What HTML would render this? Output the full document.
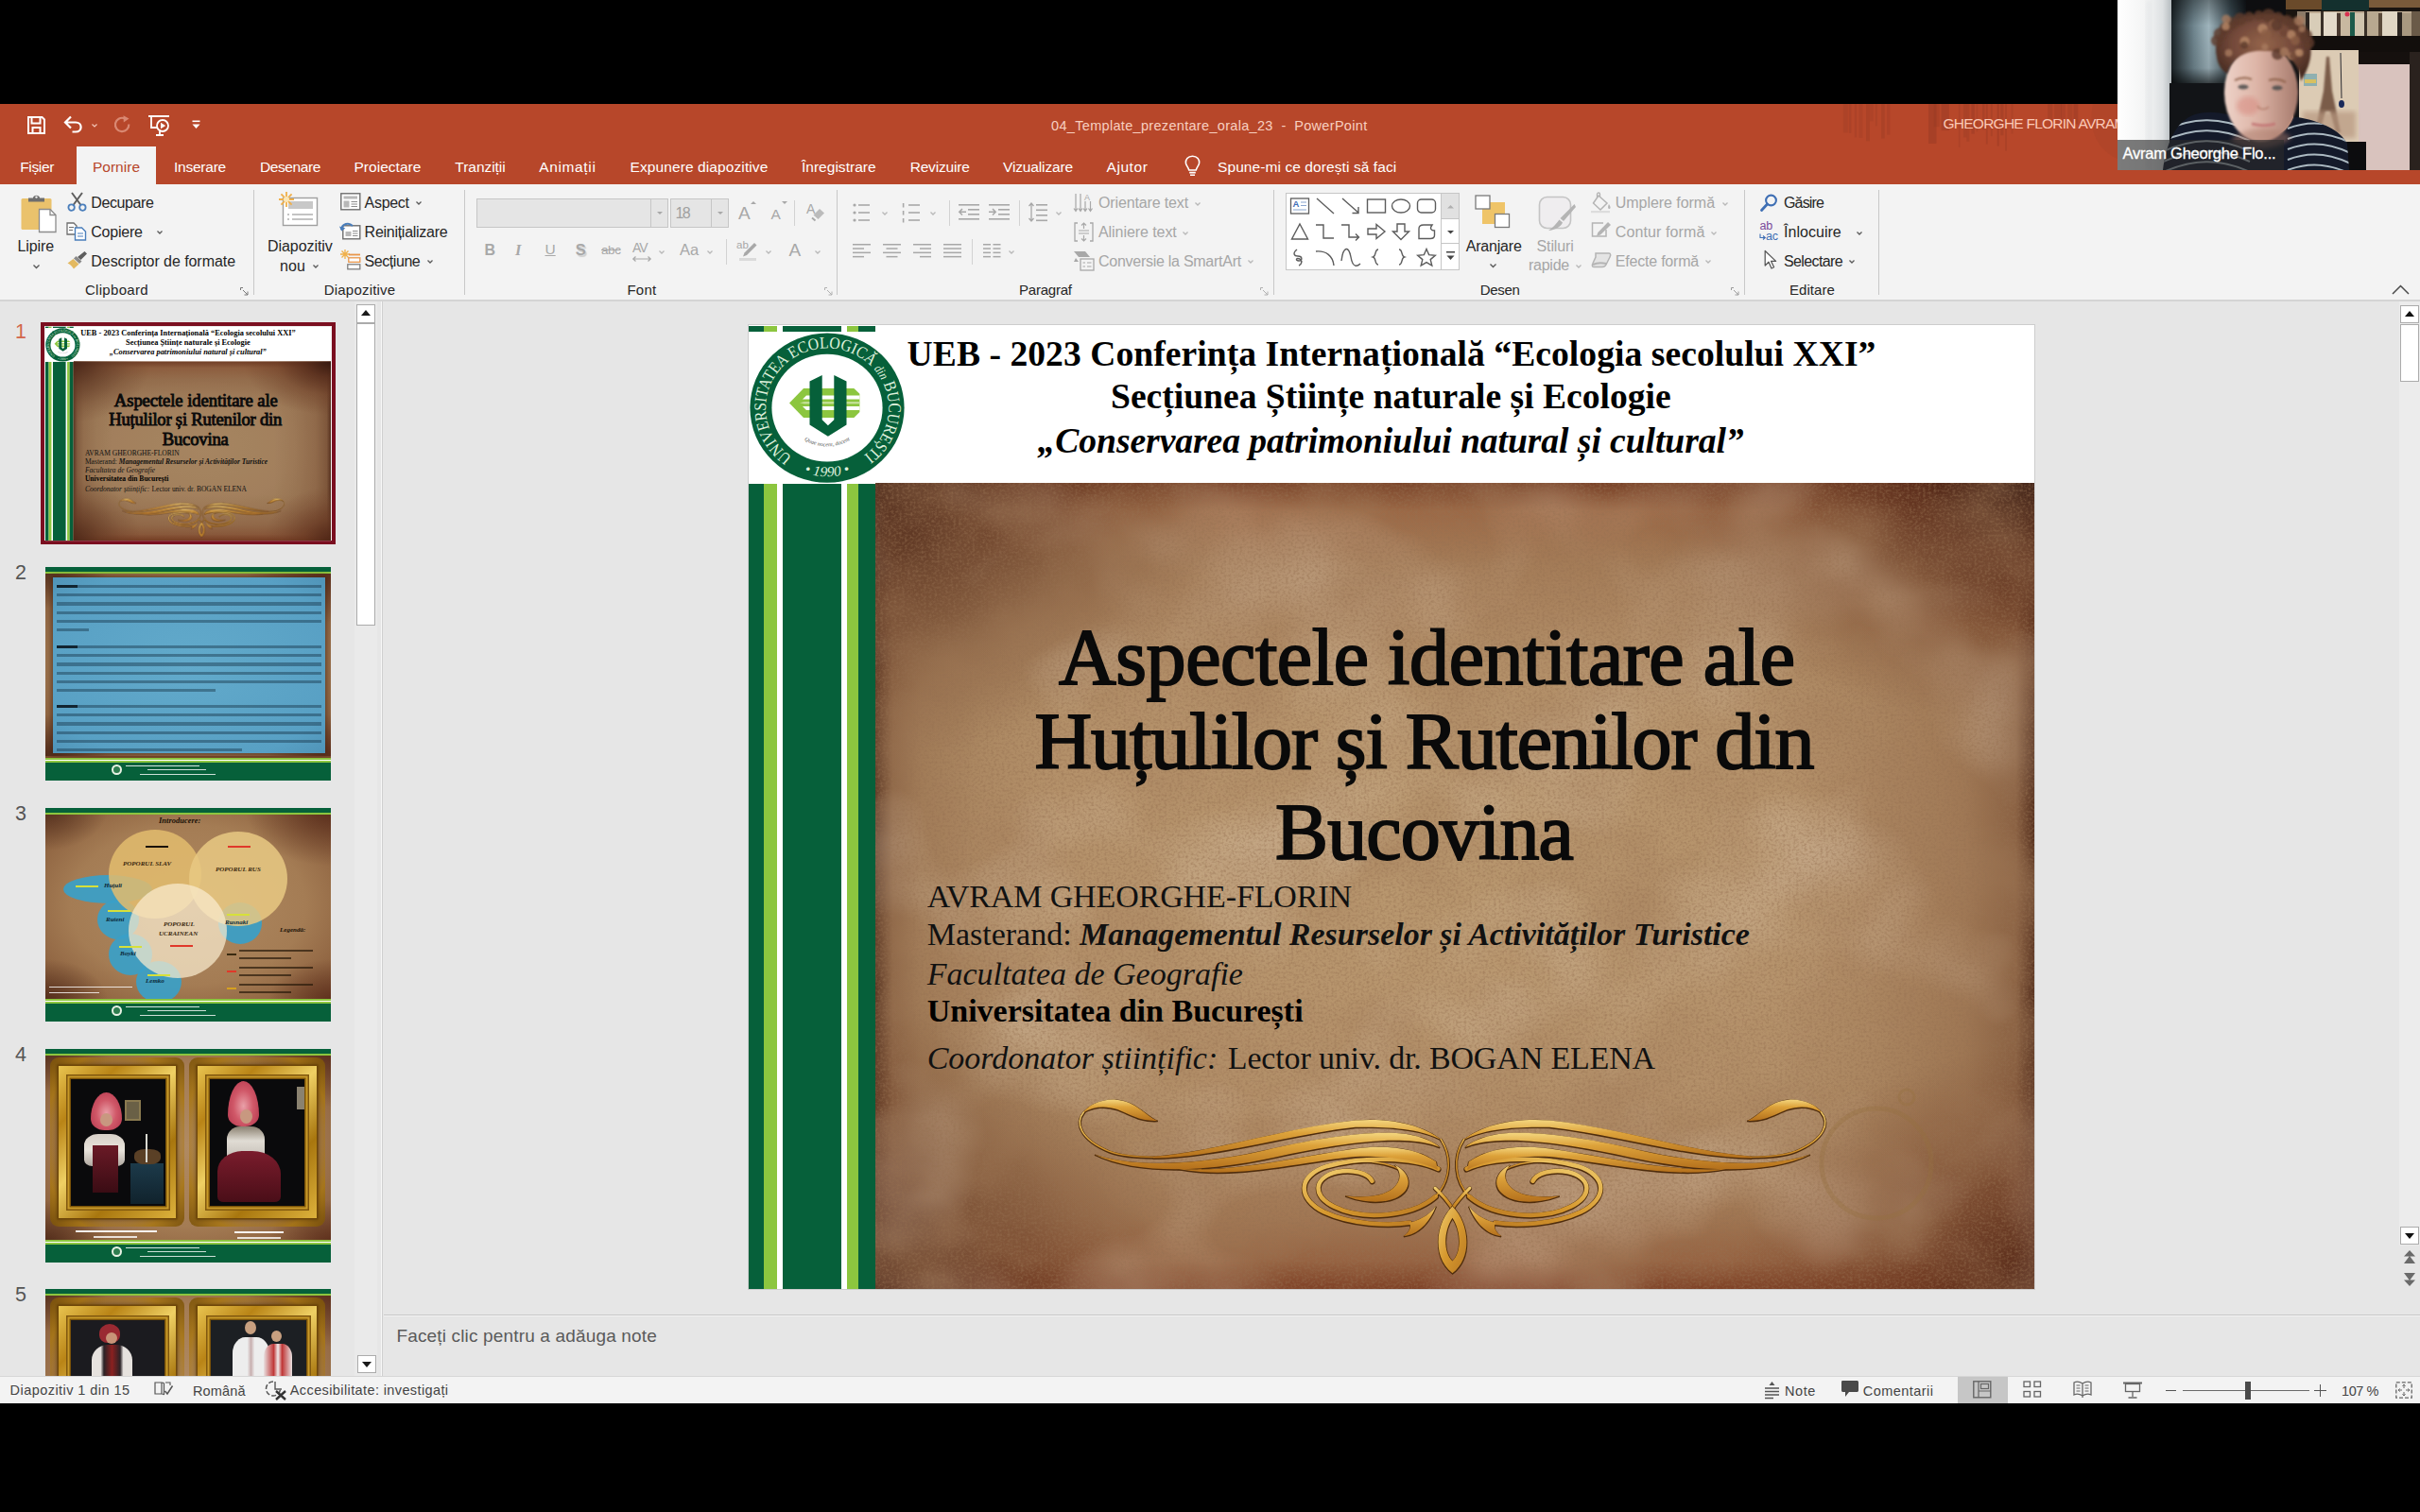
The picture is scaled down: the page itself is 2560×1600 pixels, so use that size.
<!DOCTYPE html>
<html><head><meta charset="utf-8"><title>PowerPoint</title><style>
html,body{margin:0;padding:0;background:#000;}
body{width:2560px;height:1600px;position:relative;overflow:hidden;font-family:"Liberation Sans",sans-serif;}
.t{position:absolute;white-space:pre;z-index:1;}
.b{position:absolute;box-sizing:border-box;}
svg{position:absolute;overflow:visible;}
</style></head><body>
<div class="b" style="left:0px;top:110px;width:2560px;height:85px;background:#B7472A;"></div>
<div class="b" style="left:0px;top:195px;width:2560px;height:123px;background:#F3F3F3;"></div>
<div class="b" style="left:0px;top:317px;width:2560px;height:2px;background:#D4D4D4;"></div>
<div class="b" style="left:0px;top:319px;width:2560px;height:1137px;background:#E6E6E6;"></div>
<div class="b" style="left:0px;top:1456px;width:2560px;height:29px;background:#F3F3F3;"></div>
<div class="b" style="left:0px;top:1456px;width:2560px;height:1px;background:#D6D6D6;"></div>
<span class="t" style="left:1112.1px;top:124.3px;font-size:14.5px;line-height:19px;color:#F8CFC0;letter-spacing:0.313px;">04_Template_prezentare_orala_23  -  PowerPoint</span>
<span class="t" style="left:2055.5px;top:121.1px;font-size:15.5px;line-height:20px;color:#FBC9B6;letter-spacing:-0.752px;">GHEORGHE FLORIN AVRAM</span>
<div class="b" style="left:81px;top:155px;width:84px;height:41px;background:#F3F3F3;"></div>
<span class="t" style="left:21.2px;top:166.7px;font-size:15.5px;line-height:20px;color:#FFFFFF;letter-spacing:-0.332px;">Fișier</span>
<span class="t" style="left:97.9px;top:166.7px;font-size:15.5px;line-height:20px;color:#B7472A;letter-spacing:0.033px;">Pornire</span>
<span class="t" style="left:184.0px;top:166.7px;font-size:15.5px;line-height:20px;color:#FFFFFF;letter-spacing:-0.233px;">Inserare</span>
<span class="t" style="left:275.0px;top:166.7px;font-size:15.5px;line-height:20px;color:#FFFFFF;letter-spacing:-0.401px;">Desenare</span>
<span class="t" style="left:374.5px;top:166.7px;font-size:15.5px;line-height:20px;color:#FFFFFF;letter-spacing:0.025px;">Proiectare</span>
<span class="t" style="left:481.3px;top:166.7px;font-size:15.5px;line-height:20px;color:#FFFFFF;letter-spacing:-0.032px;">Tranziții</span>
<span class="t" style="left:570.2px;top:166.7px;font-size:15.5px;line-height:20px;color:#FFFFFF;letter-spacing:0.646px;">Animații</span>
<span class="t" style="left:666.5px;top:166.7px;font-size:15.5px;line-height:20px;color:#FFFFFF;letter-spacing:0.100px;">Expunere diapozitive</span>
<span class="t" style="left:847.9px;top:166.7px;font-size:15.5px;line-height:20px;color:#FFFFFF;letter-spacing:0.034px;">Înregistrare</span>
<span class="t" style="left:962.7px;top:166.7px;font-size:15.5px;line-height:20px;color:#FFFFFF;letter-spacing:-0.190px;">Revizuire</span>
<span class="t" style="left:1061.0px;top:166.7px;font-size:15.5px;line-height:20px;color:#FFFFFF;letter-spacing:-0.140px;">Vizualizare</span>
<span class="t" style="left:1170.5px;top:166.7px;font-size:15.5px;line-height:20px;color:#FFFFFF;letter-spacing:0.568px;">Ajutor</span>
<span class="t" style="left:1288.0px;top:166.7px;font-size:15.5px;line-height:20px;color:#FFFFFF;letter-spacing:0.087px;">Spune-mi ce dorești să faci</span>
<div class="b" style="left:268px;top:201px;width:1px;height:111px;background:#C8C8C8;"></div>
<div class="b" style="left:491px;top:201px;width:1px;height:111px;background:#C8C8C8;"></div>
<div class="b" style="left:885px;top:201px;width:1px;height:111px;background:#C8C8C8;"></div>
<div class="b" style="left:1347px;top:201px;width:1px;height:111px;background:#C8C8C8;"></div>
<div class="b" style="left:1845px;top:201px;width:1px;height:111px;background:#C8C8C8;"></div>
<div class="b" style="left:1987px;top:201px;width:1px;height:111px;background:#C8C8C8;"></div>
<span class="t" style="left:18.5px;top:250.0px;font-size:16px;line-height:21px;color:#262626;letter-spacing:-0.106px;">Lipire</span>
<span class="t" style="left:96.3px;top:204.4px;font-size:16px;line-height:21px;color:#262626;letter-spacing:-0.410px;">Decupare</span>
<span class="t" style="left:96.3px;top:234.6px;font-size:16px;line-height:21px;color:#262626;letter-spacing:-0.233px;">Copiere</span>
<span class="t" style="left:96.3px;top:265.8px;font-size:16px;line-height:21px;color:#262626;letter-spacing:-0.054px;">Descriptor de formate</span>
<span class="t" style="left:89.9px;top:297.1px;font-size:15px;line-height:20px;color:#262626;letter-spacing:0.321px;">Clipboard</span>
<span class="t" style="left:283.0px;top:250.0px;font-size:16px;line-height:21px;color:#262626;letter-spacing:-0.066px;">Diapozitiv</span>
<span class="t" style="left:296.0px;top:270.8px;font-size:16px;line-height:21px;color:#262626;letter-spacing:0.101px;">nou</span>
<span class="t" style="left:385.6px;top:204.4px;font-size:16px;line-height:21px;color:#262626;letter-spacing:-0.302px;">Aspect</span>
<span class="t" style="left:385.6px;top:234.6px;font-size:16px;line-height:21px;color:#262626;letter-spacing:-0.271px;">Reinițializare</span>
<span class="t" style="left:385.6px;top:265.8px;font-size:16px;line-height:21px;color:#262626;letter-spacing:-0.446px;">Secțiune</span>
<span class="t" style="left:342.7px;top:297.1px;font-size:15px;line-height:20px;color:#262626;letter-spacing:0.212px;">Diapozitive</span>
<div class="b" style="left:504px;top:210px;width:203px;height:31px;background:#E5E5E5;border:1px solid #C6C6C6;"></div>
<div class="b" style="left:688px;top:211px;width:1px;height:29px;background:#C6C6C6;"></div>
<div class="b" style="left:709px;top:210px;width:62px;height:31px;background:#E5E5E5;border:1px solid #C6C6C6;"></div>
<div class="b" style="left:752px;top:211px;width:1px;height:29px;background:#C6C6C6;"></div>
<span class="t" style="left:714.5px;top:214.8px;font-size:16px;line-height:21px;color:#A0A0A0;letter-spacing:-1.649px;">18</span>
<span class="t" style="left:663.4px;top:297.1px;font-size:15px;line-height:20px;color:#262626;letter-spacing:0.246px;">Font</span>
<span class="t" style="left:1162.0px;top:204.4px;font-size:16px;line-height:21px;color:#A6A6A6;letter-spacing:-0.138px;">Orientare text</span>
<span class="t" style="left:1162.0px;top:234.6px;font-size:16px;line-height:21px;color:#A6A6A6;letter-spacing:-0.069px;">Aliniere text</span>
<span class="t" style="left:1162.0px;top:265.8px;font-size:16px;line-height:21px;color:#A6A6A6;letter-spacing:-0.267px;">Conversie la SmartArt</span>
<span class="t" style="left:1078.0px;top:297.1px;font-size:15px;line-height:20px;color:#262626;letter-spacing:-0.229px;">Paragraf</span>
<div class="b" style="left:1360px;top:204px;width:184px;height:82px;background:#FFFFFF;border:1px solid #C6C6C6;"></div>
<div class="b" style="left:1524px;top:205px;width:19px;height:27px;background:#E1E1E1;"></div>
<div class="b" style="left:1524px;top:204px;width:1px;height:82px;background:#C6C6C6;"></div>
<div class="b" style="left:1524px;top:231px;width:20px;height:1px;background:#C6C6C6;"></div>
<div class="b" style="left:1524px;top:257px;width:20px;height:1px;background:#C6C6C6;"></div>
<span class="t" style="left:1550.7px;top:249.8px;font-size:16px;line-height:21px;color:#262626;letter-spacing:-0.197px;">Aranjare</span>
<span class="t" style="left:1625.5px;top:249.8px;font-size:16px;line-height:21px;color:#A6A6A6;letter-spacing:-0.101px;">Stiluri</span>
<span class="t" style="left:1616.9px;top:270.4px;font-size:16px;line-height:21px;color:#A6A6A6;letter-spacing:-0.230px;">rapide</span>
<span class="t" style="left:1708.8px;top:204.4px;font-size:16px;line-height:21px;color:#A6A6A6;letter-spacing:-0.047px;">Umplere formă</span>
<span class="t" style="left:1708.8px;top:234.6px;font-size:16px;line-height:21px;color:#A6A6A6;letter-spacing:0.102px;">Contur formă</span>
<span class="t" style="left:1708.8px;top:265.8px;font-size:16px;line-height:21px;color:#A6A6A6;letter-spacing:-0.209px;">Efecte formă</span>
<span class="t" style="left:1565.8px;top:297.1px;font-size:15px;line-height:20px;color:#262626;letter-spacing:-0.312px;">Desen</span>
<span class="t" style="left:1887.0px;top:204.4px;font-size:16px;line-height:21px;color:#262626;letter-spacing:-0.854px;">Găsire</span>
<span class="t" style="left:1887.0px;top:234.6px;font-size:16px;line-height:21px;color:#262626;letter-spacing:0.036px;">Înlocuire</span>
<span class="t" style="left:1887.0px;top:265.8px;font-size:16px;line-height:21px;color:#262626;letter-spacing:-0.622px;">Selectare</span>
<span class="t" style="left:1893.0px;top:297.1px;font-size:15px;line-height:20px;color:#262626;letter-spacing:0.039px;">Editare</span>
<span class="t" style="left:10.6px;top:1462.2px;font-size:14.5px;line-height:19px;color:#444444;letter-spacing:0.443px;">Diapozitiv 1 din 15</span>
<span class="t" style="left:204.0px;top:1463.4px;font-size:14.5px;line-height:19px;color:#444444;letter-spacing:0.149px;">Română</span>
<span class="t" style="left:306.8px;top:1462.2px;font-size:14.5px;line-height:19px;color:#444444;letter-spacing:0.390px;">Accesibilitate: investigați</span>
<span class="t" style="left:1888.0px;top:1462.7px;font-size:14.5px;line-height:19px;color:#444444;letter-spacing:0.593px;">Note</span>
<span class="t" style="left:1970.8px;top:1462.7px;font-size:14.5px;line-height:19px;color:#444444;letter-spacing:0.449px;">Comentarii</span>
<div class="b" style="left:2071px;top:1457px;width:53px;height:28px;background:#C6C6C6;"></div>
<span class="t" style="left:2477.0px;top:1462.7px;font-size:14.5px;line-height:19px;color:#444444;letter-spacing:-0.423px;">107 %</span>
<div class="b" style="left:406px;top:1391px;width:2154px;height:1px;background:#C8C8C8;"></div>
<div class="b" style="left:406px;top:1392px;width:2154px;height:1px;background:#F2F2F2;"></div>
<span class="t" style="left:419.4px;top:1401.1px;font-size:19px;line-height:25px;color:#5A5A5A;letter-spacing:0.162px;">Faceți clic pentru a adăuga note</span>
<svg style="left:29px;top:123px;width:19px;height:19px" viewBox="0 0 19 19"><path d="M1 1 H15.5 L18 3.5 V18 H1 Z" fill="none" stroke="#fff" stroke-width="2"/><path d="M4.5 1 V7.5 H13.5 V1" fill="none" stroke="#fff" stroke-width="2"/><rect x="5.5" y="12" width="8" height="6" fill="none" stroke="#fff" stroke-width="2"/></svg>
<svg style="left:67px;top:122px;width:21px;height:19px" viewBox="0 0 21 19"><path d="M8 1.5 L2 7.5 L8 13.5 M2.5 7.5 H13 C20.5 7.5 20.5 17.5 13 17.5 H9.5" fill="none" stroke="#fff" stroke-width="2.2"/></svg>
<svg style="left:97.0px;top:131.0px;width:6px;height:4.0px" viewBox="0 0 6 4.0"><path d="M0.5 0.5 L3.0 3.0 L5.5 0.5" fill="none" stroke="#F3C6B8" stroke-width="1.2"/></svg>
<svg style="left:119px;top:122px;width:20px;height:20px" viewBox="0 0 20 20"><path d="M12.5 3.2 A7.2 7.2 0 1 0 17.3 9.5" fill="none" stroke="#D98872" stroke-width="2.2"/><path d="M11.5 0.2 L17.5 3.6 L11.8 7.4Z" fill="#D98872"/></svg>
<svg style="left:157px;top:121px;width:23px;height:23px" viewBox="0 0 23 23"><path d="M0 2 H22 M3 2 V14 H9 M8 22 H16 M12 18 V22" fill="none" stroke="#fff" stroke-width="1.8"/><circle cx="15" cy="12" r="6" fill="none" stroke="#fff" stroke-width="1.8"/><path d="M13 8.8 L18.2 12 L13 15.2Z" fill="#fff"/></svg>
<svg style="left:203px;top:127px;width:9px;height:10px" viewBox="0 0 9 10"><rect x="0.5" y="0.5" width="8" height="1.6" fill="#fff"/><path d="M0.5 4.5 H8.5 L4.5 9Z" fill="#fff"/></svg>
<svg style="left:1253px;top:164px;width:17px;height:23px" viewBox="0 0 17 23"><path d="M8.5 1.2 C3.5 1.2 1 5 1.4 8.6 C1.8 11.5 4.2 13 4.8 16 H12.2 C12.8 13 15.2 11.5 15.6 8.6 C16 5 13.5 1.2 8.5 1.2Z M5.2 18.6 H11.8 M6 21.2 H11" fill="none" stroke="#fff" stroke-width="1.6"/></svg>
<svg style="left:1946px;top:110px;width:300px;height:85px" viewBox="0 0 300 85"><rect x="3.9" y="0" width="4.8" height="30.3" fill="#8E3622" opacity="0.25"/><rect x="9.8" y="0" width="2.6" height="30.9" fill="#8E3622" opacity="0.26"/><rect x="15.8" y="0" width="2.3" height="35.4" fill="#8E3622" opacity="0.23"/><rect x="20.4" y="0" width="4.1" height="35.8" fill="#8E3622" opacity="0.20"/><rect x="28.0" y="0" width="4.0" height="39.2" fill="#8E3622" opacity="0.27"/><rect x="32.1" y="0" width="3.6" height="18.3" fill="#8E3622" opacity="0.20"/><rect x="37.9" y="0" width="2.1" height="23.3" fill="#8E3622" opacity="0.25"/><rect x="44.1" y="0" width="3.6" height="36.5" fill="#8E3622" opacity="0.27"/><rect x="50.0" y="0" width="3.4" height="32.6" fill="#8E3622" opacity="0.23"/><rect x="94.0" y="0" width="8.4" height="41.9" fill="#8E3622" opacity="0.40"/><rect x="99.6" y="0" width="6.2" height="24.2" fill="#8E3622" opacity="0.28"/><rect x="107.5" y="0" width="8.4" height="28.1" fill="#8E3622" opacity="0.34"/><rect x="125.9" y="0" width="1.5" height="45.8" fill="#8E3622" opacity="0.26"/><rect x="130.9" y="0" width="3.5" height="35.4" fill="#8E3622" opacity="0.29"/><rect x="134.3" y="0" width="3.1" height="39.8" fill="#8E3622" opacity="0.27"/><rect x="139.4" y="0" width="3.4" height="31.6" fill="#8E3622" opacity="0.34"/><rect x="144.6" y="0" width="1.7" height="29.3" fill="#8E3622" opacity="0.24"/><rect x="151.0" y="0" width="2.6" height="27.4" fill="#8E3622" opacity="0.30"/><rect x="154.9" y="0" width="1.8" height="42.6" fill="#8E3622" opacity="0.33"/><rect x="159.9" y="0" width="1.9" height="34.1" fill="#8E3622" opacity="0.27"/><rect x="166.7" y="0" width="2.1" height="44.6" fill="#8E3622" opacity="0.36"/><rect x="170.2" y="0" width="3.2" height="33.3" fill="#8E3622" opacity="0.33"/><rect x="175.1" y="0" width="1.9" height="49.7" fill="#8E3622" opacity="0.27"/><rect x="181.5" y="0" width="2.1" height="31.5" fill="#8E3622" opacity="0.24"/><rect x="220.2" y="0" width="5.0" height="17.0" fill="#8E3622" opacity="0.29"/><rect x="227.2" y="0" width="7.8" height="15.4" fill="#8E3622" opacity="0.28"/><rect x="234.1" y="0" width="4.7" height="20.4" fill="#8E3622" opacity="0.23"/><rect x="241.3" y="0" width="5.0" height="19.8" fill="#8E3622" opacity="0.24"/><rect x="247.5" y="0" width="4.8" height="21.3" fill="#8E3622" opacity="0.34"/><path d="M268 0 C262 30 275 50 294 58 L294 0Z" fill="#8E3622" opacity=".14"/></svg>
<svg style="left:21px;top:205px;width:40px;height:42px" viewBox="0 0 40 42"><rect x="1.5" y="5" width="32" height="33" rx="1.5" fill="#EAC26C"/><path d="M9 8.5 V4.5 H14 C14 0.8 21 0.8 21 4.5 H26 V8.5Z" fill="#6E6E6E"/><circle cx="17.5" cy="3.6" r="1.2" fill="#F3F3F3"/><path d="M20.5 16.5 H32 L38 22.5 V40.5 H20.5Z" fill="#fff" stroke="#8C8C8C" stroke-width="1.3"/><path d="M32 16.5 V22.5 H38" fill="none" stroke="#8C8C8C" stroke-width="1.3"/></svg>
<svg style="left:34.5px;top:279.75px;width:7px;height:4.5px" viewBox="0 0 7 4.5"><path d="M0.5 0.5 L3.5 3.5 L6.5 0.5" fill="none" stroke="#5a5a5a" stroke-width="1.4"/></svg>
<svg style="left:71px;top:203px;width:21px;height:21px" viewBox="0 0 21 21"><path d="M5 1 L14.5 14 M16 1 L6.5 14" stroke="#5E5E5E" stroke-width="2" fill="none"/><circle cx="4.6" cy="16.6" r="3.2" fill="none" stroke="#4A7EBB" stroke-width="1.8"/><circle cx="16.4" cy="16.6" r="3.2" fill="none" stroke="#4A7EBB" stroke-width="1.8"/></svg>
<svg style="left:70px;top:235px;width:22px;height:20px" viewBox="0 0 22 20"><path d="M1 1 H8 L11 4 V13 H1Z" fill="#fff" stroke="#6E6E6E" stroke-width="1.3"/><path d="M3 5.5 H8 M3 8.5 H7" stroke="#6E6E6E" stroke-width="1.2"/><path d="M9.5 6 H16.5 L20.5 10 V19 H9.5Z" fill="#fff" stroke="#4A7EBB" stroke-width="1.4"/><path d="M12 12 H18 M12 15 H18" stroke="#4A7EBB" stroke-width="1.2"/></svg>
<svg style="left:166.0px;top:244.0px;width:6px;height:4.0px" viewBox="0 0 6 4.0"><path d="M0.5 0.5 L3.0 3.0 L5.5 0.5" fill="none" stroke="#5a5a5a" stroke-width="1.3"/></svg>
<svg style="left:71px;top:265px;width:22px;height:20px" viewBox="0 0 22 20"><path d="M11 7 L18.5 1 L21 3.5 L14.5 10Z" fill="#5E5E5E"/><path d="M9.5 6 L15.5 11.5 L13 14 L7 8.5Z" fill="#8A8A8A"/><path d="M6.5 9 L12.5 14.5 L7 19.5 C5 16.5 3 14.5 0.5 13.5Z" fill="#E3B961"/></svg>
<svg style="left:254px;top:303.5px;width:9px;height:9px" viewBox="0 0 9 9"><path d="M0.5 3 V0.5 H3 M3 3 L8 8 M8 4.5 V8 H4.5" fill="none" stroke="#777" stroke-width="1"/></svg>
<svg style="left:295px;top:203px;width:42px;height:37px" viewBox="0 0 42 37"><rect x="4.5" y="6.5" width="36" height="29" fill="#fff" stroke="#A0A0A0" stroke-width="1.4"/><rect x="10" y="10" width="26" height="8" fill="#C8C8C8"/><path d="M9 24 H11 M14 24 H36 M9 29 H11 M14 29 H36" stroke="#B0B0B0" stroke-width="1.6"/><g stroke="#F0B04A" stroke-width="1.8"><path d="M8 0 V16 M0 8 H16 M2.4 2.4 L13.6 13.6 M13.6 2.4 L2.4 13.6"/></g><circle cx="8" cy="8" r="3" fill="#FBE7B8"/></svg>
<svg style="left:331.0px;top:280.0px;width:6px;height:4.0px" viewBox="0 0 6 4.0"><path d="M0.5 0.5 L3.0 3.0 L5.5 0.5" fill="none" stroke="#5a5a5a" stroke-width="1.3"/></svg>
<svg style="left:360px;top:204px;width:22px;height:19px" viewBox="0 0 22 19"><rect x="0.8" y="0.8" width="20" height="17" fill="#fff" stroke="#6E6E6E" stroke-width="1.4"/><rect x="3.5" y="3.5" width="14.5" height="3" fill="#B8B8B8"/><rect x="3.5" y="8.5" width="6" height="7" fill="#B8B8B8"/><path d="M11.5 9.5 H18 M11.5 12 H18 M11.5 14.5 H18" stroke="#8C8C8C" stroke-width="1.1"/></svg>
<svg style="left:439.7px;top:213.2px;width:6px;height:4.0px" viewBox="0 0 6 4.0"><path d="M0.5 0.5 L3.0 3.0 L5.5 0.5" fill="none" stroke="#5a5a5a" stroke-width="1.3"/></svg>
<svg style="left:359px;top:234px;width:23px;height:20px" viewBox="0 0 23 20"><rect x="3.8" y="4.8" width="18" height="14" fill="#fff" stroke="#6E6E6E" stroke-width="1.4"/><rect x="6.5" y="11" width="6" height="5" fill="#B8B8B8"/><path d="M14 10.5 H19.5 M14 13 H19.5 M14 15.5 H19.5" stroke="#8C8C8C" stroke-width="1.1"/><path d="M2 9 C3 2.5 10 1 14 5" fill="none" stroke="#4A7EBB" stroke-width="2"/><path d="M0 5.5 L2.2 10.6 L6.4 7.4Z" fill="#4A7EBB"/></svg>
<svg style="left:360px;top:264px;width:22px;height:22px" viewBox="0 0 22 22"><g stroke="#F0B04A" stroke-width="1.3"><path d="M5 0 V10 M0 5 H10 M1.5 1.5 L8.5 8.5 M8.5 1.5 L1.5 8.5"/></g><path d="M9 5.5 H21" stroke="#E8964A" stroke-width="1.8"/><rect x="8.8" y="8.8" width="12" height="4.5" fill="#fff" stroke="#E8964A" stroke-width="1.3"/><rect x="7.8" y="15.8" width="13" height="5" fill="#fff" stroke="#7E7E7E" stroke-width="1.3"/></svg>
<svg style="left:452.0px;top:274.8px;width:6px;height:4.0px" viewBox="0 0 6 4.0"><path d="M0.5 0.5 L3.0 3.0 L5.5 0.5" fill="none" stroke="#5a5a5a" stroke-width="1.3"/></svg>
<svg style="left:694.5px;top:224.0px;width:6px;height:3.0px" viewBox="0 0 6 3.0"><path d="M0 0 L3.0 3.0 L6 0Z" fill="#A8A8A8"/></svg>
<svg style="left:758.5px;top:224.0px;width:6px;height:3.0px" viewBox="0 0 6 3.0"><path d="M0 0 L3.0 3.0 L6 0Z" fill="#A8A8A8"/></svg>
<span class="t" style="left:781.0px;top:213.1px;font-size:19px;line-height:25px;color:#A8A8A8;">A</span>
<svg style="left:794.0px;top:213.0px;width:6px;height:3.0px" viewBox="0 0 6 3.0"><path d="M0 3.0 L3.0 0 L6 3.0Z" fill="#A8A8A8"/></svg>
<span class="t" style="left:815.5px;top:216.8px;font-size:15.5px;line-height:20px;color:#A8A8A8;">A</span>
<svg style="left:826.5px;top:213.0px;width:6px;height:3.0px" viewBox="0 0 6 3.0"><path d="M0 0 L3.0 3.0 L6 0Z" fill="#A8A8A8"/></svg>
<div class="b" style="left:840px;top:212px;width:1px;height:27px;background:#D2D2D2;"></div>
<span class="t" style="left:853.0px;top:212.4px;font-size:14px;line-height:18px;color:#A8A8A8;">A</span>
<svg style="left:858px;top:220px;width:15px;height:14px" viewBox="0 0 15 14"><path d="M9 1 L14 5.5 L7.5 12 L2.5 7.5Z" fill="#A8A8A8" opacity=".75"/><path d="M1 10.5 L4.5 13.5" stroke="#A8A8A8" stroke-width="2"/></svg>
<span class="t" style="left:512.6px;top:254.2px;font-size:16px;line-height:21px;color:#A8A8A8;font-weight:bold;">B</span>
<span class="t" style="left:545.0px;top:254.2px;font-size:16.5px;line-height:21px;color:#A8A8A8;font-family:'Liberation Serif',serif;font-weight:bold;font-style:italic;">I</span>
<span class="t" style="left:576.5px;top:254.2px;font-size:15.5px;line-height:20px;color:#A8A8A8;text-decoration:underline;">U</span>
<span class="t" style="left:608.7px;top:254.2px;font-size:16.5px;line-height:21px;color:#A8A8A8;font-weight:bold;text-shadow:1.5px 1.5px 1px #cfcfcf;">S</span>
<span class="t" style="left:636.0px;top:256.3px;font-size:13.5px;line-height:18px;color:#A8A8A8;text-decoration:line-through;letter-spacing:-0.4px;">abc</span>
<span class="t" style="left:669.0px;top:252.8px;font-size:14px;line-height:18px;color:#A8A8A8;letter-spacing:-1px;">AV</span>
<svg style="left:669px;top:271px;width:20px;height:6px" viewBox="0 0 20 6"><path d="M0.5 3 H19.5 M3.5 0.5 L0.8 3 L3.5 5.5 M16.5 0.5 L19.2 3 L16.5 5.5" fill="none" stroke="#A8A8A8" stroke-width="1.2"/></svg>
<svg style="left:696.6px;top:264.5px;width:6px;height:4.0px" viewBox="0 0 6 4.0"><path d="M0.5 0.5 L3.0 3.0 L5.5 0.5" fill="none" stroke="#B8B8B8" stroke-width="1.3"/></svg>
<span class="t" style="left:719.0px;top:254.2px;font-size:16.5px;line-height:21px;color:#A8A8A8;">Aa</span>
<svg style="left:747.6px;top:264.5px;width:6px;height:4.0px" viewBox="0 0 6 4.0"><path d="M0.5 0.5 L3.0 3.0 L5.5 0.5" fill="none" stroke="#B8B8B8" stroke-width="1.3"/></svg>
<div class="b" style="left:768px;top:253px;width:1px;height:27px;background:#D2D2D2;"></div>
<span class="t" style="left:779.0px;top:251.5px;font-size:11.5px;line-height:15px;color:#A8A8A8;">ab</span>
<svg style="left:781px;top:256px;width:20px;height:20px" viewBox="0 0 20 20"><path d="M17 1 L19.5 3.5 L9 14 L5 15.5 L6.5 11.5Z" fill="#A8A8A8"/><rect x="1" y="17" width="18" height="3" fill="#DADADA"/></svg>
<svg style="left:810.0px;top:264.5px;width:6px;height:4.0px" viewBox="0 0 6 4.0"><path d="M0.5 0.5 L3.0 3.0 L5.5 0.5" fill="none" stroke="#B8B8B8" stroke-width="1.3"/></svg>
<span class="t" style="left:834.5px;top:252.0px;font-size:19px;line-height:25px;color:#A8A8A8;">A</span>
<svg style="left:862.0px;top:264.5px;width:6px;height:4.0px" viewBox="0 0 6 4.0"><path d="M0.5 0.5 L3.0 3.0 L5.5 0.5" fill="none" stroke="#B8B8B8" stroke-width="1.3"/></svg>
<svg style="left:872px;top:303.5px;width:9px;height:9px" viewBox="0 0 9 9"><path d="M0.5 3 V0.5 H3 M3 3 L8 8 M8 4.5 V8 H4.5" fill="none" stroke="#B0B0B0" stroke-width="1"/></svg>
<svg style="left:902px;top:215px;width:19px;height:20px" viewBox="0 0 19 20"><circle cx="2" cy="2" r="1.6" fill="#A8A8A8"/><rect x="6" y="1.2" width="12" height="1.6" fill="#A8A8A8"/><circle cx="2" cy="10" r="1.6" fill="#A8A8A8"/><rect x="6" y="9.2" width="12" height="1.6" fill="#A8A8A8"/><circle cx="2" cy="18" r="1.6" fill="#A8A8A8"/><rect x="6" y="17.2" width="12" height="1.6" fill="#A8A8A8"/></svg>
<svg style="left:932.8px;top:223.5px;width:6px;height:4.0px" viewBox="0 0 6 4.0"><path d="M0.5 0.5 L3.0 3.0 L5.5 0.5" fill="none" stroke="#B8B8B8" stroke-width="1.3"/></svg>
<svg style="left:954px;top:215px;width:20px;height:20px" viewBox="0 0 20 20"><rect x="7" y="1.2" width="12" height="1.6" fill="#A8A8A8"/><rect x="7" y="9.2" width="12" height="1.6" fill="#A8A8A8"/><rect x="7" y="17.2" width="12" height="1.6" fill="#A8A8A8"/><rect x="0.8" y="0" width="1.6" height="4.5" fill="#A8A8A8"/><rect x="0.8" y="8" width="1.6" height="4.5" fill="#A8A8A8"/><rect x="0.8" y="16" width="1.6" height="4.5" fill="#A8A8A8"/></svg>
<svg style="left:984.4px;top:223.5px;width:6px;height:4.0px" viewBox="0 0 6 4.0"><path d="M0.5 0.5 L3.0 3.0 L5.5 0.5" fill="none" stroke="#B8B8B8" stroke-width="1.3"/></svg>
<div class="b" style="left:1004px;top:212px;width:1px;height:27px;background:#D2D2D2;"></div>
<svg style="left:1014px;top:216px;width:22px;height:18px" viewBox="0 0 22 18"><rect x="0" y="0" width="22" height="1.6" fill="#A8A8A8"/><rect x="10" y="5" width="12" height="1.6" fill="#A8A8A8"/><rect x="10" y="10" width="12" height="1.6" fill="#A8A8A8"/><rect x="0" y="15" width="22" height="1.6" fill="#A8A8A8"/><path d="M8 8.3 H1 M4 5 L0.8 8.3 L4 11.6" fill="none" stroke="#A8A8A8" stroke-width="1.5"/></svg>
<svg style="left:1046px;top:216px;width:22px;height:18px" viewBox="0 0 22 18"><rect x="0" y="0" width="22" height="1.6" fill="#A8A8A8"/><rect x="10" y="5" width="12" height="1.6" fill="#A8A8A8"/><rect x="10" y="10" width="12" height="1.6" fill="#A8A8A8"/><rect x="0" y="15" width="22" height="1.6" fill="#A8A8A8"/><path d="M0 8.3 H7 M4 5 L7.2 8.3 L4 11.6" fill="none" stroke="#A8A8A8" stroke-width="1.5"/></svg>
<div class="b" style="left:1078px;top:212px;width:1px;height:27px;background:#D2D2D2;"></div>
<svg style="left:1088px;top:214px;width:20px;height:21px" viewBox="0 0 20 21"><rect x="8" y="2" width="12" height="1.6" fill="#A8A8A8"/><rect x="8" y="7.5" width="12" height="1.6" fill="#A8A8A8"/><rect x="8" y="13" width="12" height="1.6" fill="#A8A8A8"/><rect x="8" y="18.5" width="12" height="1.6" fill="#A8A8A8"/><path d="M3 1 V20 M0.5 4 L3 1 L5.5 4 M0.5 17 L3 20 L5.5 17" fill="none" stroke="#A8A8A8" stroke-width="1.3"/></svg>
<svg style="left:1116.7px;top:223.5px;width:6px;height:4.0px" viewBox="0 0 6 4.0"><path d="M0.5 0.5 L3.0 3.0 L5.5 0.5" fill="none" stroke="#B8B8B8" stroke-width="1.3"/></svg>
<svg style="left:902px;top:258px;width:20px;height:15px" viewBox="0 0 20 15"><rect x="0" y="0.0" width="19" height="1.5" fill="#A8A8A8"/><rect x="0" y="4.3" width="12" height="1.5" fill="#A8A8A8"/><rect x="0" y="8.6" width="19" height="1.5" fill="#A8A8A8"/><rect x="0" y="12.899999999999999" width="12" height="1.5" fill="#A8A8A8"/></svg>
<svg style="left:934px;top:258px;width:20px;height:15px" viewBox="0 0 20 15"><rect x="0" y="0.0" width="19" height="1.5" fill="#A8A8A8"/><rect x="3.5" y="4.3" width="12" height="1.5" fill="#A8A8A8"/><rect x="0" y="8.6" width="19" height="1.5" fill="#A8A8A8"/><rect x="3.5" y="12.899999999999999" width="12" height="1.5" fill="#A8A8A8"/></svg>
<svg style="left:966px;top:258px;width:20px;height:15px" viewBox="0 0 20 15"><rect x="0" y="0.0" width="19" height="1.5" fill="#A8A8A8"/><rect x="7" y="4.3" width="12" height="1.5" fill="#A8A8A8"/><rect x="0" y="8.6" width="19" height="1.5" fill="#A8A8A8"/><rect x="7" y="12.899999999999999" width="12" height="1.5" fill="#A8A8A8"/></svg>
<svg style="left:998px;top:258px;width:20px;height:15px" viewBox="0 0 20 15"><rect x="0" y="0.0" width="19" height="1.5" fill="#A8A8A8"/><rect x="0" y="4.3" width="19" height="1.5" fill="#A8A8A8"/><rect x="0" y="8.6" width="19" height="1.5" fill="#A8A8A8"/><rect x="0" y="12.899999999999999" width="19" height="1.5" fill="#A8A8A8"/></svg>
<div class="b" style="left:1028px;top:253px;width:1px;height:27px;background:#D2D2D2;"></div>
<svg style="left:1039.5px;top:258px;width:19px;height:15px" viewBox="0 0 19 15"><rect x="0" y="0.0" width="8" height="1.5" fill="#A8A8A8"/><rect x="10.5" y="0.0" width="8" height="1.5" fill="#A8A8A8"/><rect x="0" y="4.3" width="8" height="1.5" fill="#A8A8A8"/><rect x="10.5" y="4.3" width="8" height="1.5" fill="#A8A8A8"/><rect x="0" y="8.6" width="8" height="1.5" fill="#A8A8A8"/><rect x="10.5" y="8.6" width="8" height="1.5" fill="#A8A8A8"/><rect x="0" y="12.899999999999999" width="8" height="1.5" fill="#A8A8A8"/><rect x="10.5" y="12.899999999999999" width="8" height="1.5" fill="#A8A8A8"/></svg>
<svg style="left:1067.0px;top:264.5px;width:6px;height:4.0px" viewBox="0 0 6 4.0"><path d="M0.5 0.5 L3.0 3.0 L5.5 0.5" fill="none" stroke="#B8B8B8" stroke-width="1.3"/></svg>
<svg style="left:1136px;top:204px;width:21px;height:22px" viewBox="0 0 21 22"><path d="M2 1 V19 M7 1 V19 M12 9 V19 M17.5 9 V19 M0 16.5 L2 19.5 L4 16.5 M5 16.5 L7 19.5 L9 16.5 M10 16.5 L12 19.5 L14 16.5 M15.5 16.5 L17.5 19.5 L19.5 16.5" fill="none" stroke="#A8A8A8" stroke-width="1.2"/><text x="11" y="7.5" font-size="9" font-family="Liberation Sans,sans-serif" fill="#A8A8A8">A</text></svg>
<svg style="left:1263.8px;top:213.5px;width:6px;height:4.0px" viewBox="0 0 6 4.0"><path d="M0.5 0.5 L3.0 3.0 L5.5 0.5" fill="none" stroke="#B8B8B8" stroke-width="1.3"/></svg>
<svg style="left:1136px;top:235px;width:21px;height:21px" viewBox="0 0 21 21"><path d="M4 1 H1 V20 H4 M17 1 H20 V20 H17" fill="none" stroke="#A8A8A8" stroke-width="1.3"/><path d="M10.5 1 V7 M8 3.5 L10.5 1 L13 3.5 M10.5 20 V14 M8 17.5 L10.5 20 L13 17.5 M5 9 H16 M5 12 H16" fill="none" stroke="#A8A8A8" stroke-width="1.2"/></svg>
<svg style="left:1251.0px;top:244.5px;width:6px;height:4.0px" viewBox="0 0 6 4.0"><path d="M0.5 0.5 L3.0 3.0 L5.5 0.5" fill="none" stroke="#B8B8B8" stroke-width="1.3"/></svg>
<svg style="left:1136px;top:265px;width:22px;height:22px" viewBox="0 0 22 22"><path d="M0 1 H12 L17 7 H5Z" fill="#A8A8A8"/><path d="M2 8 L0 12 H5" fill="#A8A8A8"/><rect x="7" y="9" width="14" height="12" fill="#F3F3F3" stroke="#A8A8A8" stroke-width="1.3"/><path d="M9.5 13 H12 M14 13 H18.5 M9.5 17 H12 M14 17 H18.5" stroke="#A8A8A8" stroke-width="1.2"/></svg>
<svg style="left:1319.8px;top:275.0px;width:6px;height:4.0px" viewBox="0 0 6 4.0"><path d="M0.5 0.5 L3.0 3.0 L5.5 0.5" fill="none" stroke="#B8B8B8" stroke-width="1.3"/></svg>
<svg style="left:1333px;top:303.5px;width:9px;height:9px" viewBox="0 0 9 9"><path d="M0.5 3 V0.5 H3 M3 3 L8 8 M8 4.5 V8 H4.5" fill="none" stroke="#B0B0B0" stroke-width="1"/></svg>
<svg style="left:1364.0px;top:207.5px;width:22px;height:20px" viewBox="0 0 22 20"><rect x="1.5" y="2" width="19" height="16" fill="#fff" stroke="#5C5C5C" stroke-width="1.3"/><text x="3.5" y="11" font-size="9.5" font-weight="bold" font-family="Liberation Sans,sans-serif" fill="#3E6DB5">A</text><path d="M12 6 H18 M12 9.5 H18 M4 14 H18" stroke="#8AA6D0" stroke-width="1.1"/></svg>
<svg style="left:1391.0px;top:207.5px;width:22px;height:20px" viewBox="0 0 22 20"><path d="M2 2 L20 18" fill="none" stroke="#5C5C5C" stroke-width="1.4"/></svg>
<svg style="left:1418.0px;top:207.5px;width:22px;height:20px" viewBox="0 0 22 20"><path d="M2 2 L19 17 M19 11 V17.5 H12.5" fill="none" stroke="#5C5C5C" stroke-width="1.4"/></svg>
<svg style="left:1444.7px;top:207.5px;width:22px;height:20px" viewBox="0 0 22 20"><rect x="1.5" y="3" width="19" height="14" fill="none" stroke="#5C5C5C" stroke-width="1.4"/></svg>
<svg style="left:1471.0px;top:207.5px;width:22px;height:20px" viewBox="0 0 22 20"><ellipse cx="11" cy="10" rx="9.5" ry="7" fill="none" stroke="#5C5C5C" stroke-width="1.4"/></svg>
<svg style="left:1498.0px;top:207.5px;width:22px;height:20px" viewBox="0 0 22 20"><rect x="1.5" y="3" width="19" height="14" rx="4" fill="none" stroke="#5C5C5C" stroke-width="1.4"/></svg>
<svg style="left:1364.0px;top:234.8px;width:22px;height:20px" viewBox="0 0 22 20"><path d="M11 2 L19.5 18 H2.5Z" fill="none" stroke="#5C5C5C" stroke-width="1.4"/></svg>
<svg style="left:1391.0px;top:234.8px;width:22px;height:20px" viewBox="0 0 22 20"><path d="M1 3 H9 V17 H20" fill="none" stroke="#5C5C5C" stroke-width="1.4"/></svg>
<svg style="left:1418.0px;top:234.8px;width:22px;height:20px" viewBox="0 0 22 20"><path d="M1 3 H9 V16 H19 M16 12.5 L19.5 16 L16 19.5" fill="none" stroke="#5C5C5C" stroke-width="1.4"/></svg>
<svg style="left:1444.7px;top:234.8px;width:22px;height:20px" viewBox="0 0 22 20"><path d="M2 7 H11 V2.5 L20 10 L11 17.5 V13 H2Z" fill="none" stroke="#5C5C5C" stroke-width="1.4"/></svg>
<svg style="left:1471.0px;top:234.8px;width:22px;height:20px" viewBox="0 0 22 20"><path d="M7 2 H15 V10 H19.5 L11 18.5 L2.5 10 H7Z" fill="none" stroke="#5C5C5C" stroke-width="1.4"/></svg>
<svg style="left:1498.0px;top:234.8px;width:22px;height:20px" viewBox="0 0 22 20"><path d="M3 7 C3 4 5 3 8 3 H17 C14 7 16 9 19.5 9 V14 C19.5 17 18 17.5 15 17.5 H3Z" fill="none" stroke="#5C5C5C" stroke-width="1.4"/></svg>
<svg style="left:1364.0px;top:261.6px;width:22px;height:20px" viewBox="0 0 22 20"><path d="M8 2 C3 6 5 9 9 9 C14 9 14 14 10 14 C6 14 7 10 11 12 C14 14 13 18 10 19" fill="none" stroke="#5C5C5C" stroke-width="1.4"/></svg>
<svg style="left:1391.0px;top:261.6px;width:22px;height:20px" viewBox="0 0 22 20"><path d="M1 4 C12 3 19 9 20 19" fill="none" stroke="#5C5C5C" stroke-width="1.4"/></svg>
<svg style="left:1418.0px;top:261.6px;width:22px;height:20px" viewBox="0 0 22 20"><path d="M1 14 C3 -2 9 -2 11 10 C13 22 18 20 21 17" fill="none" stroke="#5C5C5C" stroke-width="1.4"/></svg>
<svg style="left:1444.7px;top:261.6px;width:22px;height:20px" viewBox="0 0 22 20"><path d="M13 2 C9 2 11 9 7.5 10 C11 11 9 18 13 18" fill="none" stroke="#5C5C5C" stroke-width="1.4"/></svg>
<svg style="left:1471.0px;top:261.6px;width:22px;height:20px" viewBox="0 0 22 20"><path d="M9 2 C13 2 11 9 14.5 10 C11 11 13 18 9 18" fill="none" stroke="#5C5C5C" stroke-width="1.4"/></svg>
<svg style="left:1498.0px;top:261.6px;width:22px;height:20px" viewBox="0 0 22 20"><path d="M11 1.5 L13.6 7.6 L20.3 8.2 L15.2 12.6 L16.8 19 L11 15.6 L5.2 19 L6.8 12.6 L1.7 8.2 L8.4 7.6Z" fill="none" stroke="#5C5C5C" stroke-width="1.4"/></svg>
<svg style="left:1530.5px;top:216.75px;width:7px;height:3.5px" viewBox="0 0 7 3.5"><path d="M0 3.5 L3.5 0 L7 3.5Z" fill="#B0B0B0"/></svg>
<svg style="left:1530.5px;top:243.75px;width:7px;height:3.5px" viewBox="0 0 7 3.5"><path d="M0 0 L3.5 3.5 L7 0Z" fill="#444"/></svg>
<svg style="left:1529.5px;top:266px;width:9px;height:10px" viewBox="0 0 9 10"><rect x="0" y="0" width="9" height="1.5" fill="#444"/><path d="M0.5 4.5 H8.5 L4.5 9Z" fill="#444"/></svg>
<svg style="left:1560px;top:206px;width:38px;height:37px" viewBox="0 0 38 37"><rect x="8" y="8" width="24" height="23" fill="#EFC468"/><rect x="1" y="1" width="15" height="14" fill="#fff" stroke="#7A7A7A" stroke-width="1.3"/><rect x="21.5" y="20.5" width="15" height="14" fill="#fff" stroke="#7A7A7A" stroke-width="1.3"/></svg>
<svg style="left:1576.2px;top:279.05px;width:7px;height:4.5px" viewBox="0 0 7 4.5"><path d="M0.5 0.5 L3.5 3.5 L6.5 0.5" fill="none" stroke="#5a5a5a" stroke-width="1.4"/></svg>
<svg style="left:1627px;top:207px;width:40px;height:40px" viewBox="0 0 40 40"><rect x="1.5" y="1.5" width="33" height="33" rx="8" fill="#EFEDEF" stroke="#C4C4C4" stroke-width="1.6"/><path d="M38.5 9 L40 12 L27 27 L23.5 24Z" fill="#B4B4B4"/><path d="M22.5 25.5 L26 28.5 C24 33 18 36.5 11 37 C16 34 19 30 22.5 25.5Z" fill="#B4B4B4"/></svg>
<svg style="left:1666.5px;top:280.0px;width:6px;height:4.0px" viewBox="0 0 6 4.0"><path d="M0.5 0.5 L3.0 3.0 L5.5 0.5" fill="none" stroke="#B8B8B8" stroke-width="1.3"/></svg>
<svg style="left:1683px;top:203px;width:22px;height:22px" viewBox="0 0 22 22"><path d="M8 4 L17 12 L10 19 L2.5 12Z" fill="none" stroke="#B4B4B4" stroke-width="1.5"/><path d="M6.5 6 V2.5 C6.5 0.5 9.5 0.5 9.5 2.5 V5" fill="none" stroke="#B4B4B4" stroke-width="1.3"/><path d="M19 13 C21 16 21 17.5 19.5 18 C18 18 17.5 16 19 13Z" fill="#B4B4B4"/><rect x="0" y="20" width="20" height="2.2" fill="#DCDCDC"/></svg>
<svg style="left:1821.5px;top:213.5px;width:6px;height:4.0px" viewBox="0 0 6 4.0"><path d="M0.5 0.5 L3.0 3.0 L5.5 0.5" fill="none" stroke="#B8B8B8" stroke-width="1.3"/></svg>
<svg style="left:1683px;top:234px;width:22px;height:21px" viewBox="0 0 22 21"><path d="M13 2 H1.5 V16 H16 V9" fill="none" stroke="#B4B4B4" stroke-width="1.5"/><path d="M18 1 L21 4 L10 14.5 L6 15.8 L7.4 12Z" fill="#B4B4B4"/></svg>
<svg style="left:1810.0px;top:244.5px;width:6px;height:4.0px" viewBox="0 0 6 4.0"><path d="M0.5 0.5 L3.0 3.0 L5.5 0.5" fill="none" stroke="#B8B8B8" stroke-width="1.3"/></svg>
<svg style="left:1683px;top:266px;width:22px;height:19px" viewBox="0 0 22 19"><path d="M5 2 H19 C21 2 21 4 20 6 L16 14 C15 16 13.5 16.5 12 16.5 H3 C1 16.5 1 14.5 2 12.5 L5 6Z" fill="#E4E4E4" stroke="#B4B4B4" stroke-width="1.5"/><path d="M2 14 C6 12 12 12 16.5 13" fill="none" stroke="#B4B4B4" stroke-width="2"/></svg>
<svg style="left:1804.0px;top:275.3px;width:6px;height:4.0px" viewBox="0 0 6 4.0"><path d="M0.5 0.5 L3.0 3.0 L5.5 0.5" fill="none" stroke="#B8B8B8" stroke-width="1.3"/></svg>
<svg style="left:1831px;top:303.5px;width:9px;height:9px" viewBox="0 0 9 9"><path d="M0.5 3 V0.5 H3 M3 3 L8 8 M8 4.5 V8 H4.5" fill="none" stroke="#9a9a9a" stroke-width="1"/></svg>
<svg style="left:1862px;top:205px;width:19px;height:19px" viewBox="0 0 19 19"><circle cx="11.5" cy="7" r="5.4" fill="none" stroke="#3F6FB4" stroke-width="2.1"/><path d="M7.5 11 L1.5 17.5" stroke="#3F6FB4" stroke-width="2.8" stroke-linecap="round"/></svg>
<span class="t" style="left:1861.5px;top:230.9px;font-size:12.5px;line-height:16px;color:#7A4A9A;letter-spacing:-0.3px;">ab</span>
<span class="t" style="left:1868.0px;top:241.9px;font-size:12.5px;line-height:16px;color:#3F6FB4;letter-spacing:-0.3px;">ac</span>
<svg style="left:1861px;top:247px;width:8px;height:8px" viewBox="0 0 8 8"><path d="M1 0.5 V4.5 H6 M4 2.5 L6.3 4.5 L4 6.5" fill="none" stroke="#3F6FB4" stroke-width="1.1"/></svg>
<svg style="left:1963.8px;top:244.5px;width:6px;height:4.0px" viewBox="0 0 6 4.0"><path d="M0.5 0.5 L3.0 3.0 L5.5 0.5" fill="none" stroke="#5a5a5a" stroke-width="1.3"/></svg>
<svg style="left:1866px;top:264px;width:14px;height:22px" viewBox="0 0 14 22"><path d="M1.2 1.5 V17 L5 13.2 L8 20 L10.6 18.8 L7.6 12.4 H12.6Z" fill="#fff" stroke="#555" stroke-width="1.25" stroke-linejoin="round"/></svg>
<svg style="left:1956.0px;top:275.0px;width:6px;height:4.0px" viewBox="0 0 6 4.0"><path d="M0.5 0.5 L3.0 3.0 L5.5 0.5" fill="none" stroke="#5a5a5a" stroke-width="1.3"/></svg>
<svg style="left:2530px;top:301px;width:19px;height:11px" viewBox="0 0 19 11"><path d="M1 10 L9.5 1.5 L18 10" fill="none" stroke="#4a4a4a" stroke-width="1.5"/></svg>
<div class="b" style="left:2538px;top:319px;width:22px;height:1072px;background:#ECECEC;"></div>
<div class="b" style="left:2539px;top:323px;width:20px;height:19px;background:#fff;border:1px solid #ABABAB;"></div>
<svg style="left:2544px;top:329px;width:10px;height:6px" viewBox="0 0 10 6"><path d="M0 6L5 0L10 6Z" fill="#111"/></svg>
<div class="b" style="left:2539px;top:343px;width:20px;height:61px;background:#fff;border:1px solid #ABABAB;"></div>
<div class="b" style="left:2539px;top:1298px;width:20px;height:19px;background:#fff;border:1px solid #ABABAB;"></div>
<svg style="left:2544px;top:1305px;width:10px;height:6px" viewBox="0 0 10 6"><path d="M0 0L5 6L10 0Z" fill="#111"/></svg>
<div class="b" style="left:2538px;top:1318px;width:22px;height:73px;background:#E6E6E6;"></div>
<svg style="left:2543px;top:1323px;width:12px;height:15px" viewBox="0 0 12 15"><path d="M6 0 L12 6.5 H0Z M6 6 L12 14 H0Z" fill="#6a6a6a"/></svg>
<svg style="left:2543px;top:1346px;width:12px;height:15px" viewBox="0 0 12 15"><path d="M6 15 L12 8.5 H0Z M6 9 L12 1 H0Z" fill="#6a6a6a"/></svg>
<svg style="left:163px;top:1461px;width:21px;height:19px" viewBox="0 0 21 19"><path d="M1 2 H8 V14 H1Z M8 2 C10 2 10.5 3 10.5 3 V15 C10.5 15 10 14 8 14" fill="none" stroke="#555" stroke-width="1.2"/><path d="M11.5 11 L14 14 L19.5 5.5" fill="none" stroke="#555" stroke-width="1.5"/><path d="M12 2 H17 V5" fill="none" stroke="#555" stroke-width="1.1"/></svg>
<svg style="left:280px;top:1459px;width:24px;height:24px" viewBox="0 0 24 24"><path d="M9 3 A7.5 7.5 0 1 0 16.5 11" fill="none" stroke="#555" stroke-width="1.5" stroke-dasharray="5 2.2"/><path d="M11 3 V11 H18" fill="none" stroke="#555" stroke-width="1.4"/><path d="M12 13 L22 22 M22 13 L12 22" stroke="#333" stroke-width="2.4"/></svg>
<svg style="left:1866px;top:1461px;width:17px;height:19px" viewBox="0 0 17 19"><path d="M8.5 1 L11.5 5 H5.5Z" fill="#555"/><path d="M1 8 H16 M1 11.5 H16 M1 15 H16 M1 18.5 H10" stroke="#555" stroke-width="1.5"/></svg>
<svg style="left:1947px;top:1460px;width:20px;height:20px" viewBox="0 0 20 20"><path d="M2 1 H17 C18.5 1 19 1.5 19 3 V11 C19 12.5 18.5 13 17 13 H9 L5 18 V13 H3 C1.5 13 1 12.5 1 11 V3 C1 1.5 1.5 1 2 1Z" fill="#4a4a4a"/></svg>
<svg style="left:2087px;top:1461px;width:20px;height:19px" viewBox="0 0 20 19"><rect x="0.8" y="0.8" width="18" height="17" fill="none" stroke="#666" stroke-width="1.4"/><path d="M6 1 V18 M6 11 H19" stroke="#666" stroke-width="1.2"/><rect x="8.5" y="3.5" width="8" height="5" fill="none" stroke="#666" stroke-width="1.2"/></svg>
<svg style="left:2140px;top:1461px;width:20px;height:19px" viewBox="0 0 20 19"><rect x="1" y="1" width="6.5" height="5.5" fill="none" stroke="#666" stroke-width="1.3"/><rect x="1" y="11.5" width="6.5" height="5.5" fill="none" stroke="#666" stroke-width="1.3"/><rect x="12" y="1" width="6.5" height="5.5" fill="none" stroke="#666" stroke-width="1.3"/><rect x="12" y="11.5" width="6.5" height="5.5" fill="none" stroke="#666" stroke-width="1.3"/></svg>
<svg style="left:2193px;top:1461px;width:20px;height:19px" viewBox="0 0 20 19"><path d="M10 3 C7 1 3 1 1 2 V15 C3 14 7 14 10 16 C13 14 17 14 19 15 V2 C17 1 13 1 10 3 V18" fill="none" stroke="#666" stroke-width="1.3"/><path d="M3.5 5 H7.5 M3.5 8 H7.5 M3.5 11 H7.5 M12.5 5 H16.5 M12.5 8 H16.5 M12.5 11 H16.5" stroke="#666" stroke-width="1"/></svg>
<svg style="left:2246px;top:1462px;width:20px;height:18px" viewBox="0 0 20 18"><path d="M0 1.5 H20" stroke="#666" stroke-width="2"/><rect x="2.5" y="2.5" width="15" height="8" fill="none" stroke="#666" stroke-width="1.3"/><path d="M10 10.5 V16 M5.5 17 H14.5" stroke="#666" stroke-width="1.3"/></svg>
<div class="b" style="left:2291px;top:1470.5px;width:11px;height:1.6px;background:#555;"></div>
<div class="b" style="left:2309px;top:1471px;width:134px;height:1.2px;background:#6a6a6a;"></div>
<div class="b" style="left:2374.5px;top:1461.5px;width:6px;height:19px;background:#4a4a4a;"></div>
<div class="b" style="left:2448px;top:1470.5px;width:13px;height:1.6px;background:#555;"></div>
<div class="b" style="left:2453.7px;top:1464.8px;width:1.6px;height:13px;background:#555;"></div>
<svg style="left:2534px;top:1462px;width:18px;height:18px" viewBox="0 0 18 18"><rect x="0.8" y="0.8" width="16.4" height="16.4" fill="none" stroke="#666" stroke-width="1.3" stroke-dasharray="4 2"/><path d="M9 3 V7 M9 11 V15 M3 9 H7 M11 9 H15 M7.5 4.8 L9 3 L10.5 4.8 M7.5 13.2 L9 15 L10.5 13.2 M4.8 7.5 L3 9 L4.8 10.5 M13.2 7.5 L15 9 L13.2 10.5" fill="none" stroke="#666" stroke-width="1"/></svg>
<div class="b" style="left:791px;top:343px;width:1362px;height:1022px;background:#CDCDCD;"></div>
<div class="b" style="left:792px;top:344px;width:1360px;height:1020px;background:#FFFFFF;"></div>
<div class="b" style="left:792px;top:345px;width:16px;height:6px;background:#06603A;"></div><div class="b" style="left:808px;top:345px;width:14px;height:6px;background:#8CC63F;"></div><div class="b" style="left:822px;top:345px;width:6px;height:6px;background:#FFFFFF;"></div><div class="b" style="left:828px;top:345px;width:62px;height:6px;background:#06603A;"></div><div class="b" style="left:890px;top:345px;width:6px;height:6px;background:#FFFFFF;"></div><div class="b" style="left:896px;top:345px;width:12px;height:6px;background:#8CC63F;"></div><div class="b" style="left:908px;top:345px;width:18px;height:6px;background:#06603A;"></div>
<div class="b" style="left:792px;top:512px;width:16px;height:852px;background:#06603A;"></div><div class="b" style="left:808px;top:512px;width:14px;height:852px;background:#8CC63F;"></div><div class="b" style="left:822px;top:512px;width:6px;height:852px;background:#FFFFFF;"></div><div class="b" style="left:828px;top:512px;width:62px;height:852px;background:#06603A;"></div><div class="b" style="left:890px;top:512px;width:6px;height:852px;background:#FFFFFF;"></div><div class="b" style="left:896px;top:512px;width:12px;height:852px;background:#8CC63F;"></div><div class="b" style="left:908px;top:512px;width:18px;height:852px;background:#06603A;"></div>
<div class="b" style="left:926px;top:511px;width:1226px;height:853px;overflow:hidden;background:radial-gradient(ellipse 34% 30% at 100% 0%,rgba(50,22,14,.97) 0%,rgba(84,40,24,.75) 30%,rgba(110,58,34,.38) 62%,rgba(110,60,36,0) 100%),radial-gradient(ellipse 30% 34% at 0% 0%,rgba(72,38,24,.92) 0%,rgba(96,56,36,.62) 40%,rgba(110,66,42,.28) 72%,rgba(110,66,42,0) 100%),radial-gradient(ellipse 26% 36% at 0% 100%,rgba(78,40,24,.9) 0%,rgba(100,56,34,.6) 40%,rgba(112,66,42,.26) 72%,rgba(112,66,42,0) 100%),radial-gradient(ellipse 26% 30% at 100% 100%,rgba(80,38,22,.92) 0%,rgba(104,54,32,.58) 40%,rgba(116,66,42,.25) 72%,rgba(116,66,42,0) 100%),linear-gradient(to top,rgba(122,58,32,.9) 0%,rgba(132,68,40,.55) 3.5%,rgba(132,76,48,.32) 9%,rgba(134,82,52,.12) 18%,rgba(134,82,52,0) 26%),linear-gradient(to bottom,rgba(112,54,30,.85) 0%,rgba(136,70,40,.5) 3.5%,rgba(132,80,50,.3) 10%,rgba(132,84,54,.1) 20%,rgba(130,84,54,0) 28%),linear-gradient(to right,rgba(84,48,30,.9) 0%,rgba(112,68,44,.5) 1.5%,rgba(122,78,50,.26) 4%,rgba(128,84,54,.09) 9%,rgba(130,84,54,0) 15%),linear-gradient(to left,rgba(80,42,26,.9) 0%,rgba(110,64,40,.55) 1.6%,rgba(128,80,52,.35) 6%,rgba(135,88,58,.15) 14%,rgba(130,80,50,0) 22%),radial-gradient(ellipse 70% 65% at 50% 48%,#B9986F 0%,#B4916A 50%,#A5825B 100%);"><svg style="left:0;top:0;width:1226px;height:853px" viewBox="0 0 1226 853"><defs><filter id="pn" x="0" y="0" width="100%" height="100%"><feTurbulence type="fractalNoise" baseFrequency="0.007 0.009" numOctaves="4" seed="7"/><feColorMatrix values="0 0 0 0 0.36  0 0 0 0 0.2  0 0 0 0 0.1  1.1 0 0 0 -0.46"/></filter><filter id="pl" x="0" y="0" width="100%" height="100%"><feTurbulence type="fractalNoise" baseFrequency="0.005 0.006" numOctaves="3" seed="21"/><feColorMatrix values="0 0 0 0 0.82  0 0 0 0 0.7  0 0 0 0 0.55  0 0.9 0 0 -0.42"/></filter><filter id="pg" x="0" y="0" width="100%" height="100%"><feTurbulence type="fractalNoise" baseFrequency="0.35 0.4" numOctaves="2" seed="5"/><feColorMatrix values="0 0 0 0 0.3  0 0 0 0 0.16  0 0 0 0 0.08  0 0 1.2 0 -0.5"/></filter></defs><rect width="1226" height="853" filter="url(#pn)"/><rect width="1226" height="853" filter="url(#pl)"/><rect width="1226" height="853" filter="url(#pg)"/><circle cx="1059" cy="720" r="58" fill="none" stroke="rgba(150,112,64,.35)" stroke-width="5"/><circle cx="1091" cy="650" r="8" fill="none" stroke="rgba(150,112,64,.4)" stroke-width="3"/></svg></div>
<div class="b" style="left:792px;top:351px;width:134px;height:161px;background:#FFFFFF;"></div><svg style="left:792.5px;top:351.6px;width:164px;height:159.2px" viewBox="-82 -82 164 164" preserveAspectRatio="none"><circle r="81.6" fill="#06603A"/><circle r="58.6" fill="#fff"/><defs><path id="lr" d="M -36.9 53.5 A 65 65 0 1 1 37.9 52.8"/><path id="lb" d="M -40 63.2 A 74.8 74.8 0 0 0 40 63.2"/><path id="lq" d="M -32 30 Q 0 54 32 30"/></defs><text font-family="Liberation Serif,serif" font-size="18" fill="#DFF0DC"><textPath href="#lr" startOffset="0" textLength="327" lengthAdjust="spacingAndGlyphs">UNIVERSITATEA ECOLOGICĂ <tspan font-style="italic" font-size="13.5">din</tspan> BUCUREȘTI</textPath></text><text font-family="Liberation Serif,serif" font-size="15.5" font-style="italic" fill="#DFF0DC"><textPath href="#lb" startOffset="50%" text-anchor="middle">• 1990 •</textPath></text><text font-family="Liberation Serif,serif" font-size="6.2" font-style="italic" fill="#555"><textPath href="#lq" startOffset="50%" text-anchor="middle">Quae nocent, docent</textPath></text><path d="M -40 -5.3 L -25 -21.2 L 28.4 -21.2 L 34.4 -15.2 L 34.4 4.6 L 28.4 10.6 L -25 10.6 Z" fill="#8CC63F"/><path d="M -22 -13.6 L 34.4 -13.6 L 34.4 -9.4 L -26 -9.4 Z M -26 -1.6 L 34.4 -1.6 L 34.4 2.6 L -22 2.6 Z" fill="#fff"/><path d="M -29 -5.5 L -24 -6.6 L 34.4 -6.6 L 34.4 -4.6 L -24 -4.6 Z" fill="#C9E3A0"/><path d="M -18.5 -29 L -5.3 -35.7 L -5.3 13 L 0.9 19.2 L 7.3 13 L 7.3 -35.7 L 20.5 -29 L 20.5 18.5 L 0.9 31 L -18.5 18.5 Z" fill="#06603A"/><path d="M 7.3 -21.2 L 20.5 -21.2 L 20.5 -13.6 L 7.3 -13.6 Z M 7.3 2.6 L 20.5 2.6 L 20.5 10.6 L 7.3 10.6 Z" fill="#8CC63F" opacity=".0"/></svg>
<span class="t" style="left:959.6px;top:350.0px;font-size:37.6px;line-height:49px;color:#000;font-family:'Liberation Serif',serif;font-weight:bold;letter-spacing:0.047px;">UEB - 2023 Conferința Internațională “Ecologia secolului XXI”</span>
<span class="t" style="left:1175.0px;top:395.3px;font-size:37.6px;line-height:49px;color:#000;font-family:'Liberation Serif',serif;font-weight:bold;letter-spacing:-0.006px;">Secțiunea Științe naturale și Ecologie</span>
<span class="t" style="left:1097.6px;top:441.8px;font-size:37.6px;line-height:49px;color:#000;font-family:'Liberation Serif',serif;font-weight:bold;font-style:italic;letter-spacing:-0.057px;">„Conservarea patrimoniului natural și cultural”</span>
<span class="t" style="left:1120.0px;top:641.1px;font-size:84px;line-height:109px;color:#0a0a0a;font-family:'Liberation Serif',serif;letter-spacing:-0.405px;-webkit-text-stroke:2px #0a0a0a;">Aspectele identitare ale</span>
<span class="t" style="left:1094.5px;top:729.6px;font-size:84px;line-height:109px;color:#0a0a0a;font-family:'Liberation Serif',serif;letter-spacing:-1.063px;-webkit-text-stroke:2px #0a0a0a;">Huțulilor și Rutenilor din</span>
<span class="t" style="left:1349.0px;top:826.1px;font-size:84px;line-height:109px;color:#0a0a0a;font-family:'Liberation Serif',serif;letter-spacing:-0.866px;-webkit-text-stroke:2px #0a0a0a;">Bucovina</span>
<span class="t" style="left:980.7px;top:927.2px;font-size:34px;line-height:44px;color:#111;font-family:'Liberation Serif',serif;letter-spacing:-0.119px;">AVRAM GHEORGHE-FLORIN</span>
<span class="t" style="left:980.7px;top:967.0px;font-size:34px;line-height:44px;color:#111;font-family:'Liberation Serif',serif;">Masterand: </span>
<span class="t" style="left:1142.1px;top:967.0px;font-size:34px;line-height:44px;color:#111;font-family:'Liberation Serif',serif;font-weight:bold;font-style:italic;letter-spacing:-0.016px;">Managementul Resurselor și Activităților Turistice</span>
<span class="t" style="left:980.7px;top:1008.8px;font-size:34px;line-height:44px;color:#111;font-family:'Liberation Serif',serif;font-style:italic;">Facultatea de Geografie</span>
<span class="t" style="left:980.7px;top:1048.4px;font-size:34px;line-height:44px;color:#000;font-family:'Liberation Serif',serif;font-weight:bold;">Universitatea din București</span>
<span class="t" style="left:980.7px;top:1097.8px;font-size:34px;line-height:44px;color:#111;font-family:'Liberation Serif',serif;font-style:italic;">Coordonator științific: </span>
<span class="t" style="left:1298.8px;top:1097.8px;font-size:34px;line-height:44px;color:#111;font-family:'Liberation Serif',serif;letter-spacing:-0.161px;">Lector univ. dr. BOGAN ELENA</span>
<svg style="left:1130px;top:1155px;width:420px;height:210px" viewBox="0 0 2420 1210"><defs><linearGradient id="gd" x1="0" y1="0" x2="0" y2="1"><stop offset="0" stop-color="#F4D67E"/><stop offset=".35" stop-color="#DDA23A"/><stop offset="1" stop-color="#B4701C"/></linearGradient><linearGradient id="gd2" x1="0" y1="0" x2="1" y2="1"><stop offset="0" stop-color="#F0CC6E"/><stop offset=".5" stop-color="#D6982E"/><stop offset="1" stop-color="#B87822"/></linearGradient><g id="oh"><path d="M 95 125 C 40 190 70 290 250 365 C 330 395 420 400 524 400" fill="none" stroke="#4E2C0C" stroke-width="18" stroke-linecap="round" transform="translate(1,4)"/><path d="M 2255 472 C 2100 400 1800 394 1580 455 C 1400 510 1390 650 1560 735 C 1720 810 1950 822 2082 800" fill="none" stroke="#4E2C0C" stroke-width="35" stroke-linecap="round" transform="translate(1,4)"/><path d="M 2240 640 C 2100 762 1800 792 1620 702 C 1480 630 1500 522 1640 490 C 1740 470 1830 500 1852 546" fill="none" stroke="#4E2C0C" stroke-width="35" stroke-linecap="round" transform="translate(1,4)"/><path d="M 2272 292 C 2342 400 2332 540 2240 640" fill="none" stroke="#4E2C0C" stroke-width="18" stroke-linecap="round" transform="translate(1,4)"/><path d="M 1740 430 C 1850 420 1950 440 2010 470" fill="none" stroke="#4E2C0C" stroke-width="17" stroke-linecap="round" transform="translate(1,4)"/><path d="M 2236 588 C 2290 640 2330 690 2352 730" fill="none" stroke="#4E2C0C" stroke-width="27" stroke-linecap="round" transform="translate(1,4)"/><path d="M 545 178 C 470 150 420 60 290 50 C 200 45 120 85 90 130 C 150 90 230 85 300 110 C 380 140 440 185 545 178 Z" fill="#4E2C0C" stroke="#4E2C0C" stroke-width="9" transform="translate(1,4)"/><path d="M 520 396 C 900 368 1300 226 1750 176 C 1950 160 2150 196 2277 296 C 2150 228 1950 212 1750 218 C 1350 262 900 404 520 406 Z" fill="#4E2C0C" stroke="#4E2C0C" stroke-width="9" transform="translate(1,4)"/><path d="M 160 383 C 400 468 800 448 1200 358 C 1500 288 1850 232 2060 260 C 2160 276 2230 308 2264 340 C 2200 314 2130 304 2050 300 C 1850 286 1500 346 1200 414 C 850 486 420 512 160 383 Z" fill="#4E2C0C" stroke="#4E2C0C" stroke-width="9" transform="translate(1,4)"/><path d="M 660 470 C 1000 498 1400 398 1750 348 C 1950 322 2130 348 2242 428 L 2252 478 C 2150 424 1950 390 1750 398 C 1450 424 1000 544 660 470 Z" fill="#4E2C0C" stroke="#4E2C0C" stroke-width="9" transform="translate(1,4)"/><path d="M 1990 446 C 2095 500 2105 602 1992 652 C 1900 688 1780 672 1688 636 C 1800 650 1920 640 1980 590 C 2032 545 2032 490 1990 446 Z" fill="#4E2C0C" stroke="#4E2C0C" stroke-width="9" transform="translate(1,4)"/><path d="M 2242 698 C 2200 760 2120 792 2078 800 C 2102 832 2062 872 2044 882 C 2132 872 2202 802 2242 698 Z" fill="#4E2C0C" stroke="#4E2C0C" stroke-width="9" transform="translate(1,4)"/><path d="M 95 125 C 40 190 70 290 250 365 C 330 395 420 400 524 400" fill="none" stroke="url(#gd2)" stroke-width="9" stroke-linecap="round"/><path d="M 2255 472 C 2100 400 1800 394 1580 455 C 1400 510 1390 650 1560 735 C 1720 810 1950 822 2082 800" fill="none" stroke="url(#gd2)" stroke-width="26" stroke-linecap="round"/><path d="M 2240 640 C 2100 762 1800 792 1620 702 C 1480 630 1500 522 1640 490 C 1740 470 1830 500 1852 546" fill="none" stroke="url(#gd2)" stroke-width="26" stroke-linecap="round"/><path d="M 2272 292 C 2342 400 2332 540 2240 640" fill="none" stroke="url(#gd2)" stroke-width="9" stroke-linecap="round"/><path d="M 1740 430 C 1850 420 1950 440 2010 470" fill="none" stroke="url(#gd2)" stroke-width="8" stroke-linecap="round"/><path d="M 2236 588 C 2290 640 2330 690 2352 730" fill="none" stroke="url(#gd2)" stroke-width="18" stroke-linecap="round"/><path d="M 545 178 C 470 150 420 60 290 50 C 200 45 120 85 90 130 C 150 90 230 85 300 110 C 380 140 440 185 545 178 Z" fill="url(#gd)"/><path d="M 520 396 C 900 368 1300 226 1750 176 C 1950 160 2150 196 2277 296 C 2150 228 1950 212 1750 218 C 1350 262 900 404 520 406 Z" fill="url(#gd)"/><path d="M 160 383 C 400 468 800 448 1200 358 C 1500 288 1850 232 2060 260 C 2160 276 2230 308 2264 340 C 2200 314 2130 304 2050 300 C 1850 286 1500 346 1200 414 C 850 486 420 512 160 383 Z" fill="url(#gd)"/><path d="M 660 470 C 1000 498 1400 398 1750 348 C 1950 322 2130 348 2242 428 L 2252 478 C 2150 424 1950 390 1750 398 C 1450 424 1000 544 660 470 Z" fill="url(#gd)"/><path d="M 1990 446 C 2095 500 2105 602 1992 652 C 1900 688 1780 672 1688 636 C 1800 650 1920 640 1980 590 C 2032 545 2032 490 1990 446 Z" fill="url(#gd)"/><path d="M 2242 698 C 2200 760 2120 792 2078 800 C 2102 832 2062 872 2044 882 C 2132 872 2202 802 2242 698 Z" fill="url(#gd)"/></g></defs><use href="#oh"/><use href="#oh" transform="translate(4684,0) scale(-1,1)"/><path d="M 2342 700 C 2240 800 2215 1010 2342 1108 C 2469 1010 2444 800 2342 700 Z M 2342 770 C 2395 850 2400 980 2342 1034 C 2284 980 2289 850 2342 770 Z" fill="#4E2C0C" fill-rule="evenodd" stroke="#4E2C0C" stroke-width="9" transform="translate(1,4)"/><path d="M 2342 700 C 2240 800 2215 1010 2342 1108 C 2469 1010 2444 800 2342 700 Z M 2342 770 C 2395 850 2400 980 2342 1034 C 2284 980 2289 850 2342 770 Z" fill="url(#gd2)" fill-rule="evenodd"/></svg>
<div class="b" style="left:375px;top:319px;width:24px;height:1137px;background:#EAEAEA;"></div>
<div class="b" style="left:377px;top:322px;width:20px;height:20px;background:#FFFFFF;border:1px solid #ABABAB;"></div>
<svg style="left:382px;top:328px;width:10px;height:6px" viewBox="0 0 10 6"><path d="M0 6L5 0L10 6Z" fill="#1a1a1a"/></svg>
<div class="b" style="left:377px;top:342px;width:20px;height:320px;background:#FFFFFF;border:1px solid #ABABAB;"></div>
<div class="b" style="left:378px;top:1434px;width:20px;height:19px;background:#FFFFFF;border:1px solid #ABABAB;"></div>
<svg style="left:383px;top:1441px;width:10px;height:6px" viewBox="0 0 10 6"><path d="M0 0L5 6L10 0Z" fill="#1a1a1a"/></svg>
<div class="b" style="left:403px;top:319px;width:1px;height:1137px;background:#F8F8F8;"></div>
<div class="b" style="left:404px;top:319px;width:1px;height:1137px;background:#CFCFCF;"></div>
<span class="t" style="left:16.0px;top:337.0px;font-size:21.5px;line-height:28px;color:#D2664C;">1</span>
<span class="t" style="left:16.0px;top:591.5px;font-size:21.5px;line-height:28px;color:#555555;">2</span>
<span class="t" style="left:16.0px;top:846.5px;font-size:21.5px;line-height:28px;color:#555555;">3</span>
<span class="t" style="left:16.0px;top:1101.5px;font-size:21.5px;line-height:28px;color:#555555;">4</span>
<span class="t" style="left:16.0px;top:1355.5px;font-size:21.5px;line-height:28px;color:#555555;">5</span>
<div class="b" style="left:43px;top:341px;width:312px;height:235px;background:#FFFFFF;border:4px solid #7B0F20;"></div>
<div class="b" style="left:0;top:0;width:2560px;height:1600px;transform-origin:0 0;transform:translate(48px,345.5px) scale(.22206) translate(-792px,-344px);"><div class="b" style="left:791px;top:343px;width:1362px;height:1022px;background:#CDCDCD;"></div>
<div class="b" style="left:792px;top:344px;width:1360px;height:1020px;background:#FFFFFF;"></div>
<div class="b" style="left:792px;top:345px;width:16px;height:6px;background:#06603A;"></div><div class="b" style="left:808px;top:345px;width:14px;height:6px;background:#8CC63F;"></div><div class="b" style="left:822px;top:345px;width:6px;height:6px;background:#FFFFFF;"></div><div class="b" style="left:828px;top:345px;width:62px;height:6px;background:#06603A;"></div><div class="b" style="left:890px;top:345px;width:6px;height:6px;background:#FFFFFF;"></div><div class="b" style="left:896px;top:345px;width:12px;height:6px;background:#8CC63F;"></div><div class="b" style="left:908px;top:345px;width:18px;height:6px;background:#06603A;"></div>
<div class="b" style="left:792px;top:512px;width:16px;height:852px;background:#06603A;"></div><div class="b" style="left:808px;top:512px;width:14px;height:852px;background:#8CC63F;"></div><div class="b" style="left:822px;top:512px;width:6px;height:852px;background:#FFFFFF;"></div><div class="b" style="left:828px;top:512px;width:62px;height:852px;background:#06603A;"></div><div class="b" style="left:890px;top:512px;width:6px;height:852px;background:#FFFFFF;"></div><div class="b" style="left:896px;top:512px;width:12px;height:852px;background:#8CC63F;"></div><div class="b" style="left:908px;top:512px;width:18px;height:852px;background:#06603A;"></div>
<div class="b" style="left:926px;top:511px;width:1226px;height:853px;overflow:hidden;background:radial-gradient(ellipse 34% 30% at 100% 0%,rgba(50,22,14,.97) 0%,rgba(84,40,24,.75) 30%,rgba(110,58,34,.38) 62%,rgba(110,60,36,0) 100%),radial-gradient(ellipse 30% 34% at 0% 0%,rgba(72,38,24,.92) 0%,rgba(96,56,36,.62) 40%,rgba(110,66,42,.28) 72%,rgba(110,66,42,0) 100%),radial-gradient(ellipse 26% 36% at 0% 100%,rgba(78,40,24,.9) 0%,rgba(100,56,34,.6) 40%,rgba(112,66,42,.26) 72%,rgba(112,66,42,0) 100%),radial-gradient(ellipse 26% 30% at 100% 100%,rgba(80,38,22,.92) 0%,rgba(104,54,32,.58) 40%,rgba(116,66,42,.25) 72%,rgba(116,66,42,0) 100%),linear-gradient(to top,rgba(122,58,32,.9) 0%,rgba(132,68,40,.55) 3.5%,rgba(132,76,48,.32) 9%,rgba(134,82,52,.12) 18%,rgba(134,82,52,0) 26%),linear-gradient(to bottom,rgba(112,54,30,.85) 0%,rgba(136,70,40,.5) 3.5%,rgba(132,80,50,.3) 10%,rgba(132,84,54,.1) 20%,rgba(130,84,54,0) 28%),linear-gradient(to right,rgba(84,48,30,.9) 0%,rgba(112,68,44,.5) 1.5%,rgba(122,78,50,.26) 4%,rgba(128,84,54,.09) 9%,rgba(130,84,54,0) 15%),linear-gradient(to left,rgba(80,42,26,.9) 0%,rgba(110,64,40,.55) 1.6%,rgba(128,80,52,.35) 6%,rgba(135,88,58,.15) 14%,rgba(130,80,50,0) 22%),radial-gradient(ellipse 70% 65% at 50% 48%,#B9986F 0%,#B4916A 50%,#A5825B 100%);"></div>
<div class="b" style="left:926px;top:511px;width:1226px;height:853px;background:rgba(66,40,22,.16);"></div>
<div class="b" style="left:792px;top:351px;width:134px;height:161px;background:#FFFFFF;"></div><svg style="left:792.5px;top:351.6px;width:164px;height:159.2px" viewBox="-82 -82 164 164" preserveAspectRatio="none"><circle r="81.6" fill="#06603A"/><circle r="58.6" fill="#fff"/><defs><path id="lr" d="M -36.9 53.5 A 65 65 0 1 1 37.9 52.8"/><path id="lb" d="M -40 63.2 A 74.8 74.8 0 0 0 40 63.2"/><path id="lq" d="M -32 30 Q 0 54 32 30"/></defs><text font-family="Liberation Serif,serif" font-size="18" fill="#DFF0DC"><textPath href="#lr" startOffset="0" textLength="327" lengthAdjust="spacingAndGlyphs">UNIVERSITATEA ECOLOGICĂ <tspan font-style="italic" font-size="13.5">din</tspan> BUCUREȘTI</textPath></text><text font-family="Liberation Serif,serif" font-size="15.5" font-style="italic" fill="#DFF0DC"><textPath href="#lb" startOffset="50%" text-anchor="middle">• 1990 •</textPath></text><text font-family="Liberation Serif,serif" font-size="6.2" font-style="italic" fill="#555"><textPath href="#lq" startOffset="50%" text-anchor="middle">Quae nocent, docent</textPath></text><path d="M -40 -5.3 L -25 -21.2 L 28.4 -21.2 L 34.4 -15.2 L 34.4 4.6 L 28.4 10.6 L -25 10.6 Z" fill="#8CC63F"/><path d="M -22 -13.6 L 34.4 -13.6 L 34.4 -9.4 L -26 -9.4 Z M -26 -1.6 L 34.4 -1.6 L 34.4 2.6 L -22 2.6 Z" fill="#fff"/><path d="M -29 -5.5 L -24 -6.6 L 34.4 -6.6 L 34.4 -4.6 L -24 -4.6 Z" fill="#C9E3A0"/><path d="M -18.5 -29 L -5.3 -35.7 L -5.3 13 L 0.9 19.2 L 7.3 13 L 7.3 -35.7 L 20.5 -29 L 20.5 18.5 L 0.9 31 L -18.5 18.5 Z" fill="#06603A"/><path d="M 7.3 -21.2 L 20.5 -21.2 L 20.5 -13.6 L 7.3 -13.6 Z M 7.3 2.6 L 20.5 2.6 L 20.5 10.6 L 7.3 10.6 Z" fill="#8CC63F" opacity=".0"/></svg>
<span class="t" style="left:959.6px;top:350.0px;font-size:37.6px;line-height:49px;color:#000;font-family:'Liberation Serif',serif;font-weight:bold;letter-spacing:0.047px;">UEB - 2023 Conferința Internațională “Ecologia secolului XXI”</span>
<span class="t" style="left:1175.0px;top:395.3px;font-size:37.6px;line-height:49px;color:#000;font-family:'Liberation Serif',serif;font-weight:bold;letter-spacing:-0.006px;">Secțiunea Științe naturale și Ecologie</span>
<span class="t" style="left:1097.6px;top:441.8px;font-size:37.6px;line-height:49px;color:#000;font-family:'Liberation Serif',serif;font-weight:bold;font-style:italic;letter-spacing:-0.057px;">„Conservarea patrimoniului natural și cultural”</span>
<span class="t" style="left:1120.0px;top:641.1px;font-size:84px;line-height:109px;color:#0a0a0a;font-family:'Liberation Serif',serif;letter-spacing:-0.405px;-webkit-text-stroke:4px #0a0a0a;">Aspectele identitare ale</span>
<span class="t" style="left:1094.5px;top:729.6px;font-size:84px;line-height:109px;color:#0a0a0a;font-family:'Liberation Serif',serif;letter-spacing:-1.063px;-webkit-text-stroke:4px #0a0a0a;">Huțulilor și Rutenilor din</span>
<span class="t" style="left:1349.0px;top:826.1px;font-size:84px;line-height:109px;color:#0a0a0a;font-family:'Liberation Serif',serif;letter-spacing:-0.866px;-webkit-text-stroke:4px #0a0a0a;">Bucovina</span>
<span class="t" style="left:980.7px;top:927.2px;font-size:34px;line-height:44px;color:#111;font-family:'Liberation Serif',serif;letter-spacing:-0.119px;">AVRAM GHEORGHE-FLORIN</span>
<span class="t" style="left:980.7px;top:967.0px;font-size:34px;line-height:44px;color:#111;font-family:'Liberation Serif',serif;">Masterand: </span>
<span class="t" style="left:1142.1px;top:967.0px;font-size:34px;line-height:44px;color:#111;font-family:'Liberation Serif',serif;font-weight:bold;font-style:italic;letter-spacing:-0.016px;">Managementul Resurselor și Activităților Turistice</span>
<span class="t" style="left:980.7px;top:1008.8px;font-size:34px;line-height:44px;color:#111;font-family:'Liberation Serif',serif;font-style:italic;">Facultatea de Geografie</span>
<span class="t" style="left:980.7px;top:1048.4px;font-size:34px;line-height:44px;color:#000;font-family:'Liberation Serif',serif;font-weight:bold;">Universitatea din București</span>
<span class="t" style="left:980.7px;top:1097.8px;font-size:34px;line-height:44px;color:#111;font-family:'Liberation Serif',serif;font-style:italic;">Coordonator științific: </span>
<span class="t" style="left:1298.8px;top:1097.8px;font-size:34px;line-height:44px;color:#111;font-family:'Liberation Serif',serif;letter-spacing:-0.161px;">Lector univ. dr. BOGAN ELENA</span>
<div class="b" style="left:0;top:0;opacity:.72"><svg style="left:1130px;top:1155px;width:420px;height:210px" viewBox="0 0 2420 1210"><defs><linearGradient id="gd" x1="0" y1="0" x2="0" y2="1"><stop offset="0" stop-color="#F4D67E"/><stop offset=".35" stop-color="#DDA23A"/><stop offset="1" stop-color="#B4701C"/></linearGradient><linearGradient id="gd2" x1="0" y1="0" x2="1" y2="1"><stop offset="0" stop-color="#F0CC6E"/><stop offset=".5" stop-color="#D6982E"/><stop offset="1" stop-color="#B87822"/></linearGradient><g id="oh"><path d="M 95 125 C 40 190 70 290 250 365 C 330 395 420 400 524 400" fill="none" stroke="#4E2C0C" stroke-width="18" stroke-linecap="round" transform="translate(1,4)"/><path d="M 2255 472 C 2100 400 1800 394 1580 455 C 1400 510 1390 650 1560 735 C 1720 810 1950 822 2082 800" fill="none" stroke="#4E2C0C" stroke-width="35" stroke-linecap="round" transform="translate(1,4)"/><path d="M 2240 640 C 2100 762 1800 792 1620 702 C 1480 630 1500 522 1640 490 C 1740 470 1830 500 1852 546" fill="none" stroke="#4E2C0C" stroke-width="35" stroke-linecap="round" transform="translate(1,4)"/><path d="M 2272 292 C 2342 400 2332 540 2240 640" fill="none" stroke="#4E2C0C" stroke-width="18" stroke-linecap="round" transform="translate(1,4)"/><path d="M 1740 430 C 1850 420 1950 440 2010 470" fill="none" stroke="#4E2C0C" stroke-width="17" stroke-linecap="round" transform="translate(1,4)"/><path d="M 2236 588 C 2290 640 2330 690 2352 730" fill="none" stroke="#4E2C0C" stroke-width="27" stroke-linecap="round" transform="translate(1,4)"/><path d="M 545 178 C 470 150 420 60 290 50 C 200 45 120 85 90 130 C 150 90 230 85 300 110 C 380 140 440 185 545 178 Z" fill="#4E2C0C" stroke="#4E2C0C" stroke-width="9" transform="translate(1,4)"/><path d="M 520 396 C 900 368 1300 226 1750 176 C 1950 160 2150 196 2277 296 C 2150 228 1950 212 1750 218 C 1350 262 900 404 520 406 Z" fill="#4E2C0C" stroke="#4E2C0C" stroke-width="9" transform="translate(1,4)"/><path d="M 160 383 C 400 468 800 448 1200 358 C 1500 288 1850 232 2060 260 C 2160 276 2230 308 2264 340 C 2200 314 2130 304 2050 300 C 1850 286 1500 346 1200 414 C 850 486 420 512 160 383 Z" fill="#4E2C0C" stroke="#4E2C0C" stroke-width="9" transform="translate(1,4)"/><path d="M 660 470 C 1000 498 1400 398 1750 348 C 1950 322 2130 348 2242 428 L 2252 478 C 2150 424 1950 390 1750 398 C 1450 424 1000 544 660 470 Z" fill="#4E2C0C" stroke="#4E2C0C" stroke-width="9" transform="translate(1,4)"/><path d="M 1990 446 C 2095 500 2105 602 1992 652 C 1900 688 1780 672 1688 636 C 1800 650 1920 640 1980 590 C 2032 545 2032 490 1990 446 Z" fill="#4E2C0C" stroke="#4E2C0C" stroke-width="9" transform="translate(1,4)"/><path d="M 2242 698 C 2200 760 2120 792 2078 800 C 2102 832 2062 872 2044 882 C 2132 872 2202 802 2242 698 Z" fill="#4E2C0C" stroke="#4E2C0C" stroke-width="9" transform="translate(1,4)"/><path d="M 95 125 C 40 190 70 290 250 365 C 330 395 420 400 524 400" fill="none" stroke="url(#gd2)" stroke-width="9" stroke-linecap="round"/><path d="M 2255 472 C 2100 400 1800 394 1580 455 C 1400 510 1390 650 1560 735 C 1720 810 1950 822 2082 800" fill="none" stroke="url(#gd2)" stroke-width="26" stroke-linecap="round"/><path d="M 2240 640 C 2100 762 1800 792 1620 702 C 1480 630 1500 522 1640 490 C 1740 470 1830 500 1852 546" fill="none" stroke="url(#gd2)" stroke-width="26" stroke-linecap="round"/><path d="M 2272 292 C 2342 400 2332 540 2240 640" fill="none" stroke="url(#gd2)" stroke-width="9" stroke-linecap="round"/><path d="M 1740 430 C 1850 420 1950 440 2010 470" fill="none" stroke="url(#gd2)" stroke-width="8" stroke-linecap="round"/><path d="M 2236 588 C 2290 640 2330 690 2352 730" fill="none" stroke="url(#gd2)" stroke-width="18" stroke-linecap="round"/><path d="M 545 178 C 470 150 420 60 290 50 C 200 45 120 85 90 130 C 150 90 230 85 300 110 C 380 140 440 185 545 178 Z" fill="url(#gd)"/><path d="M 520 396 C 900 368 1300 226 1750 176 C 1950 160 2150 196 2277 296 C 2150 228 1950 212 1750 218 C 1350 262 900 404 520 406 Z" fill="url(#gd)"/><path d="M 160 383 C 400 468 800 448 1200 358 C 1500 288 1850 232 2060 260 C 2160 276 2230 308 2264 340 C 2200 314 2130 304 2050 300 C 1850 286 1500 346 1200 414 C 850 486 420 512 160 383 Z" fill="url(#gd)"/><path d="M 660 470 C 1000 498 1400 398 1750 348 C 1950 322 2130 348 2242 428 L 2252 478 C 2150 424 1950 390 1750 398 C 1450 424 1000 544 660 470 Z" fill="url(#gd)"/><path d="M 1990 446 C 2095 500 2105 602 1992 652 C 1900 688 1780 672 1688 636 C 1800 650 1920 640 1980 590 C 2032 545 2032 490 1990 446 Z" fill="url(#gd)"/><path d="M 2242 698 C 2200 760 2120 792 2078 800 C 2102 832 2062 872 2044 882 C 2132 872 2202 802 2242 698 Z" fill="url(#gd)"/></g></defs><use href="#oh"/><use href="#oh" transform="translate(4684,0) scale(-1,1)"/><path d="M 2342 700 C 2240 800 2215 1010 2342 1108 C 2469 1010 2444 800 2342 700 Z M 2342 770 C 2395 850 2400 980 2342 1034 C 2284 980 2289 850 2342 770 Z" fill="#4E2C0C" fill-rule="evenodd" stroke="#4E2C0C" stroke-width="9" transform="translate(1,4)"/><path d="M 2342 700 C 2240 800 2215 1010 2342 1108 C 2469 1010 2444 800 2342 700 Z M 2342 770 C 2395 850 2400 980 2342 1034 C 2284 980 2289 850 2342 770 Z" fill="url(#gd2)" fill-rule="evenodd"/></svg></div></div>
<div class="b" style="left:48px;top:600px;width:302px;height:226px;overflow:hidden;background:#7A4A2C">
<div class="b" style="left:0px;top:0px;width:302px;height:200px;background:radial-gradient(ellipse 30% 30% at 100% 0%,rgba(78,34,20,.8) 0%,rgba(100,50,30,0) 100%),radial-gradient(ellipse 22% 22% at 0% 0%,rgba(70,36,22,.8) 0%,rgba(96,54,32,0) 100%),radial-gradient(ellipse 22% 22% at 0% 100%,rgba(70,34,20,.8) 0%,rgba(96,50,30,0) 100%),radial-gradient(ellipse 22% 22% at 100% 100%,rgba(84,38,22,.8) 0%,rgba(104,52,30,0) 100%),radial-gradient(ellipse 75% 75% at 50% 50%,#B08A62 0%,#A47C54 55%,#7C4E30 100%);"></div>
<div class="b" style="left:0px;top:0px;width:302px;height:5px;background:#06603A;"></div><div class="b" style="left:0px;top:5px;width:302px;height:1.5px;background:#8CC63F;"></div>
<div class="b" style="left:8px;top:11px;width:288px;height:186px;background:radial-gradient(ellipse 80% 80% at 50% 50%,#62AACB 0%,#58A0C4 70%,#4A8CB0 100%);box-shadow:0 0 5px 2px rgba(60,30,15,.55);"></div>
<div class="b" style="left:12px;top:18.5px;width:22px;height:3.6px;background:rgba(0,0,0,.8);"></div>
<div class="b" style="left:12px;top:19.0px;width:280px;height:3.2px;background:rgba(20,45,65,.42);"></div><div class="b" style="left:12px;top:28.2px;width:280px;height:3.2px;background:rgba(20,45,65,.42);"></div><div class="b" style="left:12px;top:37.4px;width:280px;height:3.2px;background:rgba(20,45,65,.42);"></div><div class="b" style="left:12px;top:46.599999999999994px;width:280px;height:3.2px;background:rgba(20,45,65,.42);"></div><div class="b" style="left:12px;top:55.8px;width:280px;height:3.2px;background:rgba(20,45,65,.42);"></div><div class="b" style="left:12px;top:65.0px;width:33.6px;height:3.2px;background:rgba(20,45,65,.42);"></div>
<div class="b" style="left:12px;top:82.5px;width:22px;height:3.6px;background:rgba(0,0,0,.8);"></div>
<div class="b" style="left:12px;top:83.0px;width:280px;height:3.2px;background:rgba(20,45,65,.42);"></div><div class="b" style="left:12px;top:92.2px;width:280px;height:3.2px;background:rgba(20,45,65,.42);"></div><div class="b" style="left:12px;top:101.4px;width:280px;height:3.2px;background:rgba(20,45,65,.42);"></div><div class="b" style="left:12px;top:110.6px;width:280px;height:3.2px;background:rgba(20,45,65,.42);"></div><div class="b" style="left:12px;top:119.8px;width:280px;height:3.2px;background:rgba(20,45,65,.42);"></div><div class="b" style="left:12px;top:129.0px;width:168.0px;height:3.2px;background:rgba(20,45,65,.42);"></div>
<div class="b" style="left:12px;top:145.5px;width:22px;height:3.6px;background:rgba(0,0,0,.8);"></div>
<div class="b" style="left:12px;top:146.0px;width:280px;height:3.2px;background:rgba(20,45,65,.42);"></div><div class="b" style="left:12px;top:155.2px;width:280px;height:3.2px;background:rgba(20,45,65,.42);"></div><div class="b" style="left:12px;top:164.4px;width:280px;height:3.2px;background:rgba(20,45,65,.42);"></div><div class="b" style="left:12px;top:173.6px;width:280px;height:3.2px;background:rgba(20,45,65,.42);"></div><div class="b" style="left:12px;top:182.8px;width:280px;height:3.2px;background:rgba(20,45,65,.42);"></div><div class="b" style="left:12px;top:192.0px;width:196.0px;height:3.2px;background:rgba(20,45,65,.42);"></div>
<div class="b" style="left:0px;top:201.5px;width:302px;height:2px;background:#8CC63F;"></div><div class="b" style="left:0px;top:203.5px;width:302px;height:1.5px;background:#FFFFFF;"></div><div class="b" style="left:0px;top:205.0px;width:302px;height:1.5px;background:#8CC63F;"></div><div class="b" style="left:0px;top:206.5px;width:302px;height:21px;background:#06603A;"></div><div class="b" style="left:70px;top:208.5px;width:11px;height:11px;background:#E8F2E4;border-radius:50%;border:2px solid #E8F2E4;background:#2E7D4F;"></div><div class="b" style="left:85px;top:209.5px;width:78px;height:1.6px;background:rgba(255,255,255,.85);"></div><div class="b" style="left:108px;top:214.0px;width:62px;height:1.4px;background:rgba(255,255,255,.8);"></div><div class="b" style="left:100px;top:218.5px;width:80px;height:1.4px;background:rgba(255,255,255,.8);"></div>
</div>
<div class="b" style="left:48px;top:855px;width:302px;height:226px;overflow:hidden;background:#7A4A2C">
<div class="b" style="left:0px;top:0px;width:302px;height:205px;background:radial-gradient(ellipse 30% 30% at 100% 0%,rgba(78,34,20,.8) 0%,rgba(100,50,30,0) 100%),radial-gradient(ellipse 22% 22% at 0% 0%,rgba(70,36,22,.8) 0%,rgba(96,54,32,0) 100%),radial-gradient(ellipse 22% 22% at 0% 100%,rgba(70,34,20,.8) 0%,rgba(96,50,30,0) 100%),radial-gradient(ellipse 22% 22% at 100% 100%,rgba(84,38,22,.8) 0%,rgba(104,52,30,0) 100%),radial-gradient(ellipse 75% 75% at 50% 50%,#B08A62 0%,#A47C54 55%,#7C4E30 100%);"></div>
<div class="b" style="left:0px;top:0px;width:302px;height:5px;background:#06603A;"></div><div class="b" style="left:0px;top:5px;width:302px;height:1.5px;background:#8CC63F;"></div>
<div class="b" style="left:19px;top:71px;width:94px;height:30px;background:rgba(58,160,200,.92);border-radius:50%;"></div>
<div class="b" style="left:55px;top:97px;width:44px;height:42px;background:rgba(58,160,200,.92);border-radius:50%;"></div>
<div class="b" style="left:67px;top:133px;width:46px;height:44px;background:rgba(58,160,200,.92);border-radius:50%;"></div>
<div class="b" style="left:96px;top:162px;width:48px;height:44px;background:rgba(58,160,200,.92);border-radius:50%;"></div>
<div class="b" style="left:183px;top:100px;width:46px;height:44px;background:rgba(58,160,200,.92);border-radius:50%;"></div>
<div class="b" style="left:67px;top:23px;width:98px;height:94px;background:rgba(226,188,110,.86);border-radius:50%;"></div>
<div class="b" style="left:152px;top:25px;width:104px;height:100px;background:rgba(232,200,130,.86);border-radius:50%;"></div>
<div class="b" style="left:88px;top:80px;width:104px;height:100px;background:rgba(250,236,206,.72);border-radius:50%;"></div>
<span class="t" style="left:120.0px;top:8.1px;font-size:8.5px;line-height:11px;color:#1a1208;font-family:'Liberation Serif',serif;font-weight:bold;font-style:italic;">Introducere:</span>
<span class="t" style="left:82.0px;top:55.2px;font-size:7px;line-height:9px;color:#3a2a10;font-family:'Liberation Serif',serif;font-weight:bold;font-style:italic;">POPORUL SLAV</span>
<span class="t" style="left:180.0px;top:61.2px;font-size:7px;line-height:9px;color:#3a2a10;font-family:'Liberation Serif',serif;font-weight:bold;font-style:italic;">POPORUL RUS</span>
<span class="t" style="left:125.0px;top:119.2px;font-size:7px;line-height:9px;color:#3a2a10;font-family:'Liberation Serif',serif;font-weight:bold;font-style:italic;">POPORUL</span>
<span class="t" style="left:120.0px;top:129.2px;font-size:7px;line-height:9px;color:#3a2a10;font-family:'Liberation Serif',serif;font-weight:bold;font-style:italic;">UCRAINEAN</span>
<span class="t" style="left:62.0px;top:78.2px;font-size:7px;line-height:9px;color:#0c2a3a;font-family:'Liberation Serif',serif;font-weight:bold;font-style:italic;">Huțuli</span>
<span class="t" style="left:64.0px;top:114.2px;font-size:7px;line-height:9px;color:#0c2a3a;font-family:'Liberation Serif',serif;font-weight:bold;font-style:italic;">Ruteni</span>
<span class="t" style="left:79.0px;top:150.2px;font-size:7px;line-height:9px;color:#0c2a3a;font-family:'Liberation Serif',serif;font-weight:bold;font-style:italic;">Boyki</span>
<span class="t" style="left:106.0px;top:179.2px;font-size:7px;line-height:9px;color:#0c2a3a;font-family:'Liberation Serif',serif;font-weight:bold;font-style:italic;">Lemko</span>
<span class="t" style="left:190.0px;top:117.2px;font-size:7px;line-height:9px;color:#0c2a3a;font-family:'Liberation Serif',serif;font-weight:bold;font-style:italic;">Rusnaki</span>
<div class="b" style="left:106px;top:40px;width:24px;height:1.8px;background:#1a1208;"></div>
<div class="b" style="left:193px;top:40px;width:24px;height:1.8px;background:#E0382A;"></div>
<div class="b" style="left:32px;top:82px;width:24px;height:1.8px;background:#D6E03A;"></div>
<div class="b" style="left:66px;top:108px;width:24px;height:1.8px;background:#D6E03A;"></div>
<div class="b" style="left:78px;top:146px;width:24px;height:1.8px;background:#D6E03A;"></div>
<div class="b" style="left:108px;top:176px;width:24px;height:1.8px;background:#D6E03A;"></div>
<div class="b" style="left:192px;top:112px;width:24px;height:1.8px;background:#D6E03A;"></div>
<div class="b" style="left:132px;top:145px;width:24px;height:1.8px;background:#E0382A;"></div>
<span class="t" style="left:248.0px;top:125.2px;font-size:7px;line-height:9px;color:#1a1208;font-family:'Liberation Serif',serif;font-weight:bold;font-style:italic;">Legendă:</span>
<div class="b" style="left:192px;top:154px;width:10px;height:1.6px;background:#3a2a10;"></div>
<div class="b" style="left:205px;top:150.0px;width:78px;height:2px;background:rgba(40,25,10,.7);"></div><div class="b" style="left:205px;top:157.5px;width:54.599999999999994px;height:2px;background:rgba(40,25,10,.7);"></div>
<div class="b" style="left:192px;top:172px;width:10px;height:1.6px;background:#E0382A;"></div>
<div class="b" style="left:205px;top:168.0px;width:78px;height:2px;background:rgba(40,25,10,.7);"></div><div class="b" style="left:205px;top:175.5px;width:54.599999999999994px;height:2px;background:rgba(40,25,10,.7);"></div>
<div class="b" style="left:192px;top:190px;width:10px;height:1.6px;background:#D6A020;"></div>
<div class="b" style="left:205px;top:186.0px;width:78px;height:2px;background:rgba(40,25,10,.7);"></div><div class="b" style="left:205px;top:193.5px;width:54.599999999999994px;height:2px;background:rgba(40,25,10,.7);"></div>
<div class="b" style="left:4px;top:189px;width:88px;height:1.4px;background:rgba(255,255,255,.8);"></div><div class="b" style="left:4px;top:195px;width:52.8px;height:1.4px;background:rgba(255,255,255,.8);"></div>
<div class="b" style="left:0px;top:201.5px;width:302px;height:2px;background:#8CC63F;"></div><div class="b" style="left:0px;top:203.5px;width:302px;height:1.5px;background:#FFFFFF;"></div><div class="b" style="left:0px;top:205.0px;width:302px;height:1.5px;background:#8CC63F;"></div><div class="b" style="left:0px;top:206.5px;width:302px;height:21px;background:#06603A;"></div><div class="b" style="left:70px;top:208.5px;width:11px;height:11px;background:#E8F2E4;border-radius:50%;border:2px solid #E8F2E4;background:#2E7D4F;"></div><div class="b" style="left:85px;top:209.5px;width:78px;height:1.6px;background:rgba(255,255,255,.85);"></div><div class="b" style="left:108px;top:214.0px;width:62px;height:1.4px;background:rgba(255,255,255,.8);"></div><div class="b" style="left:100px;top:218.5px;width:80px;height:1.4px;background:rgba(255,255,255,.8);"></div>
</div>
<div class="b" style="left:48px;top:1110px;width:302px;height:226px;overflow:hidden;background:#7A4A2C">
<div class="b" style="left:0px;top:0px;width:302px;height:205px;background:radial-gradient(ellipse 30% 30% at 100% 0%,rgba(78,34,20,.8) 0%,rgba(100,50,30,0) 100%),radial-gradient(ellipse 22% 22% at 0% 0%,rgba(70,36,22,.8) 0%,rgba(96,54,32,0) 100%),radial-gradient(ellipse 22% 22% at 0% 100%,rgba(70,34,20,.8) 0%,rgba(96,50,30,0) 100%),radial-gradient(ellipse 22% 22% at 100% 100%,rgba(84,38,22,.8) 0%,rgba(104,52,30,0) 100%),radial-gradient(ellipse 75% 75% at 50% 50%,#B08A62 0%,#A47C54 55%,#7C4E30 100%);"></div>
<div class="b" style="left:0px;top:0px;width:302px;height:5px;background:#06603A;"></div><div class="b" style="left:0px;top:5px;width:302px;height:1.5px;background:#8CC63F;"></div>
<div class="b" style="left:5px;top:9px;width:142px;height:179px;border-radius:9px;background:radial-gradient(ellipse at 50% 50%,rgba(150,100,20,0) 60%,rgba(170,120,20,.85) 78%,rgba(120,80,10,.9) 100%);"></div><div class="b" style="left:14px;top:18px;width:124px;height:161px;background:linear-gradient(135deg,#E9C450 0%,#B98416 22%,#EFD064 45%,#A8760E 70%,#DDB23C 100%);box-shadow:0 0 0 1.5px rgba(110,70,8,.9),0 0 4px 2px rgba(60,35,5,.5);"></div><div class="b" style="left:22px;top:27px;width:110px;height:144px;background:#C99A28;box-shadow:inset 0 0 0 1.5px rgba(110,70,8,.8);"></div><div class="b" style="left:27px;top:32px;width:100px;height:134px;background:#0A0A0C;box-shadow:0 0 0 1.5px #7A5208;"></div>
<div class="b" style="left:152px;top:9px;width:144px;height:179px;border-radius:9px;background:radial-gradient(ellipse at 50% 50%,rgba(150,100,20,0) 60%,rgba(170,120,20,.85) 78%,rgba(120,80,10,.9) 100%);"></div><div class="b" style="left:161px;top:18px;width:126px;height:161px;background:linear-gradient(135deg,#E9C450 0%,#B98416 22%,#EFD064 45%,#A8760E 70%,#DDB23C 100%);box-shadow:0 0 0 1.5px rgba(110,70,8,.9),0 0 4px 2px rgba(60,35,5,.5);"></div><div class="b" style="left:168.5px;top:27px;width:110.5px;height:144px;background:#C99A28;box-shadow:inset 0 0 0 1.5px rgba(110,70,8,.8);"></div><div class="b" style="left:173.5px;top:32px;width:100.5px;height:134px;background:#0A0A0C;box-shadow:0 0 0 1.5px #7A5208;"></div>
<div class="b" style="left:83.5px;top:54px;width:17px;height:22px;background:#6a6046;box-shadow:inset 0 0 0 2px #8a7a50;"></div>
<div class="b" style="left:89.5px;top:121px;width:35px;height:43px;background:linear-gradient(#1c3a4a,#10222c);"></div>
<div class="b" style="left:94px;top:106px;width:28px;height:16px;border-radius:40%;background:#5a4026;"></div>
<div class="b" style="left:106px;top:90px;width:2px;height:30px;background:#D8D8D0;"></div>
<div class="b" style="left:48px;top:46px;width:33px;height:40px;border-radius:50% 50% 45% 45%/70% 70% 30% 30%;background:radial-gradient(ellipse at 50% 55%,#E9A0A8 0%,#D05868 45%,#B03048 100%);"></div>
<div class="b" style="left:58px;top:68px;width:13px;height:14px;border-radius:50%;background:#C89880;"></div>
<div class="b" style="left:41px;top:90px;width:43px;height:34px;border-radius:35% 35% 20% 20%;background:linear-gradient(#D8D0C8,#E8E4DC 50%,#B0A8A0);"></div>
<div class="b" style="left:50px;top:102px;width:27px;height:50px;background:linear-gradient(#6a1a26,#3a0c14);"></div>
<div class="b" style="left:266px;top:40px;width:8px;height:24px;background:#8a8270;"></div>
<div class="b" style="left:193px;top:34px;width:33px;height:48px;border-radius:50% 50% 45% 45%/75% 75% 25% 25%;background:radial-gradient(ellipse at 50% 55%,#E9A0A8 0%,#D05868 45%,#B03048 100%);"></div>
<div class="b" style="left:206px;top:64px;width:13px;height:15px;border-radius:50%;background:#C89880;"></div>
<div class="b" style="left:192px;top:82px;width:40px;height:38px;border-radius:35% 35% 20% 20%;background:linear-gradient(#8a8070,#E0DCD4 40%,#C0B8B0);"></div>
<div class="b" style="left:182px;top:108px;width:67px;height:54px;border-radius:40% 45% 10% 10%;background:linear-gradient(#7a1c2c,#4a0e18);"></div>
<div class="b" style="left:32px;top:192px;width:86px;height:2.4px;background:rgba(255,255,255,.92);"></div>
<div class="b" style="left:51px;top:198px;width:46px;height:1.8px;background:rgba(255,255,255,.8);"></div>
<div class="b" style="left:200px;top:193px;width:52px;height:2.4px;background:rgba(255,255,255,.92);"></div>
<div class="b" style="left:203px;top:199px;width:46px;height:1.8px;background:rgba(255,255,255,.8);"></div>
<div class="b" style="left:0px;top:201.5px;width:302px;height:2px;background:#8CC63F;"></div><div class="b" style="left:0px;top:203.5px;width:302px;height:1.5px;background:#FFFFFF;"></div><div class="b" style="left:0px;top:205.0px;width:302px;height:1.5px;background:#8CC63F;"></div><div class="b" style="left:0px;top:206.5px;width:302px;height:21px;background:#06603A;"></div><div class="b" style="left:70px;top:208.5px;width:11px;height:11px;background:#E8F2E4;border-radius:50%;border:2px solid #E8F2E4;background:#2E7D4F;"></div><div class="b" style="left:85px;top:209.5px;width:78px;height:1.6px;background:rgba(255,255,255,.85);"></div><div class="b" style="left:108px;top:214.0px;width:62px;height:1.4px;background:rgba(255,255,255,.8);"></div><div class="b" style="left:100px;top:218.5px;width:80px;height:1.4px;background:rgba(255,255,255,.8);"></div>
</div>
<div class="b" style="left:48px;top:1364px;width:302px;height:92px;overflow:hidden;background:#7A4A2C">
<div class="b" style="left:0px;top:0px;width:302px;height:205px;background:radial-gradient(ellipse 30% 30% at 100% 0%,rgba(78,34,20,.8) 0%,rgba(100,50,30,0) 100%),radial-gradient(ellipse 22% 22% at 0% 0%,rgba(70,36,22,.8) 0%,rgba(96,54,32,0) 100%),radial-gradient(ellipse 22% 22% at 0% 100%,rgba(70,34,20,.8) 0%,rgba(96,50,30,0) 100%),radial-gradient(ellipse 22% 22% at 100% 100%,rgba(84,38,22,.8) 0%,rgba(104,52,30,0) 100%),radial-gradient(ellipse 75% 75% at 50% 50%,#B08A62 0%,#A47C54 55%,#7C4E30 100%);"></div>
<div class="b" style="left:0px;top:0px;width:302px;height:5px;background:#06603A;"></div><div class="b" style="left:0px;top:5px;width:302px;height:1.5px;background:#8CC63F;"></div>
<div class="b" style="left:5px;top:9px;width:142px;height:179px;border-radius:9px;background:radial-gradient(ellipse at 50% 50%,rgba(150,100,20,0) 60%,rgba(170,120,20,.85) 78%,rgba(120,80,10,.9) 100%);"></div><div class="b" style="left:14px;top:18px;width:124px;height:161px;background:linear-gradient(135deg,#E9C450 0%,#B98416 22%,#EFD064 45%,#A8760E 70%,#DDB23C 100%);box-shadow:0 0 0 1.5px rgba(110,70,8,.9),0 0 4px 2px rgba(60,35,5,.5);"></div><div class="b" style="left:21.5px;top:27.5px;width:109px;height:144px;background:#C99A28;box-shadow:inset 0 0 0 1.5px rgba(110,70,8,.8);"></div><div class="b" style="left:26.5px;top:32.5px;width:99px;height:134px;background:#1B1B1F;box-shadow:0 0 0 1.5px #7A5208;"></div>
<div class="b" style="left:152px;top:9px;width:144px;height:179px;border-radius:9px;background:radial-gradient(ellipse at 50% 50%,rgba(150,100,20,0) 60%,rgba(170,120,20,.85) 78%,rgba(120,80,10,.9) 100%);"></div><div class="b" style="left:161px;top:18px;width:126px;height:161px;background:linear-gradient(135deg,#E9C450 0%,#B98416 22%,#EFD064 45%,#A8760E 70%,#DDB23C 100%);box-shadow:0 0 0 1.5px rgba(110,70,8,.9),0 0 4px 2px rgba(60,35,5,.5);"></div><div class="b" style="left:170px;top:28px;width:111px;height:144px;background:#C99A28;box-shadow:inset 0 0 0 1.5px rgba(110,70,8,.8);"></div><div class="b" style="left:175px;top:33px;width:101px;height:134px;background:#1C1F23;box-shadow:0 0 0 1.5px #7A5208;"></div>
<div class="b" style="left:57px;top:37px;width:22px;height:20px;border-radius:50% 50% 40% 40%;background:#9A2A32;"></div>
<div class="b" style="left:64px;top:46px;width:12px;height:12px;border-radius:50%;background:#C89478;"></div>
<div class="b" style="left:49px;top:59px;width:43px;height:40px;border-radius:40% 40% 0 0;background:linear-gradient(90deg,#E6E2DE 0%,#E6E2DE 22%,#2a2226 30%,#8a2020 50%,#2a2226 70%,#E6E2DE 78%,#E6E2DE 100%);"></div>
<div class="b" style="left:211px;top:34px;width:12px;height:14px;border-radius:50%;background:#C8A080;"></div>
<div class="b" style="left:239px;top:44px;width:11px;height:12px;border-radius:50%;background:#C8A080;"></div>
<div class="b" style="left:198px;top:51px;width:39px;height:48px;border-radius:35% 35% 0 0;background:linear-gradient(90deg,#EDEDED 0%,#EDEDED 40%,#C8B0B0 50%,#EDEDED 60%);"></div>
<div class="b" style="left:231px;top:58px;width:30px;height:40px;border-radius:35% 35% 0 0;background:linear-gradient(90deg,#E8E0E0 0%,#C03838 35%,#F0ECEC 50%,#C03838 65%,#E8E0E0 100%);"></div>
</div>
<div class="b" style="left:2240px;top:0;width:320px;height:180px;overflow:hidden;background:#141416;z-index:2;"><svg style="left:0;top:0;width:320px;height:180px" viewBox="0 0 320 180"><defs><linearGradient id="wcu" x1="0" y1="0" x2="1" y2="0"><stop offset="0" stop-color="#FFFFFF"/><stop offset=".55" stop-color="#F2F3F3"/><stop offset=".8" stop-color="#DDE0E2"/><stop offset="1" stop-color="#A9B0B4"/></linearGradient><linearGradient id="wcol" x1="0" y1="0" x2="1" y2="0"><stop offset="0" stop-color="#1c2428"/><stop offset=".3" stop-color="#6f858e"/><stop offset=".5" stop-color="#9fb4bc"/><stop offset=".8" stop-color="#3a4a52"/><stop offset="1" stop-color="#14181c"/></linearGradient><linearGradient id="wcolv" x1="0" y1="0" x2="0" y2="1"><stop offset="0" stop-color="#000" stop-opacity=".35"/><stop offset=".3" stop-color="#000" stop-opacity="0"/><stop offset=".8" stop-color="#000" stop-opacity=".1"/><stop offset="1" stop-color="#000" stop-opacity=".7"/></linearGradient><radialGradient id="whair" cx=".5" cy=".45" r=".6"><stop offset="0" stop-color="#94644A"/><stop offset=".55" stop-color="#73493A"/><stop offset="1" stop-color="#452A20"/></radialGradient><linearGradient id="wface" x1="0" y1="0" x2="1" y2="0"><stop offset="0" stop-color="#EDD2C8"/><stop offset=".45" stop-color="#DDB4A6"/><stop offset="1" stop-color="#A67A6C"/></linearGradient><filter id="wb1" x="-10%" y="-10%" width="120%" height="120%"><feGaussianBlur stdDeviation="1.2"/></filter><filter id="wb2" x="-10%" y="-10%" width="120%" height="120%"><feGaussianBlur stdDeviation="2.5"/></filter><clipPath id="wshirt"><path d="M48 180 C52 150 62 128 82 121 C100 116 118 120 134 128 L190 124 C215 128 236 138 243 152 L245 180 Z"/></clipPath></defs><rect x="176" y="0" width="144" height="56" fill="#1a1410"/><rect x="190" y="12" width="130" height="27" fill="#BCAA92"/><rect x="176" y="0" width="40" height="10" fill="#6a4a2a"/><rect x="216" y="0" width="50" height="11" fill="#14302e"/><rect x="266" y="0" width="54" height="8" fill="#7a5a3a"/><rect x="190" y="12" width="9" height="27" fill="#8a7a68"/><rect x="199" y="13" width="4" height="26" fill="#2a2420"/><rect x="203" y="14" width="12" height="25" fill="#D8CDB8"/><rect x="215" y="12" width="3" height="27" fill="#3a3028"/><rect x="218" y="13" width="14" height="26" fill="#E4DACA"/><rect x="232" y="14" width="4" height="25" fill="#4a3a30"/><rect x="236" y="12" width="10" height="27" fill="#C8B8A0"/><rect x="246" y="13" width="5" height="26" fill="#1c5a4a"/><rect x="251" y="14" width="10" height="25" fill="#D0C4AE"/><rect x="261" y="12" width="3" height="27" fill="#3a3028"/><rect x="264" y="13" width="12" height="26" fill="#B8A890"/><rect x="276" y="14" width="4" height="25" fill="#5a4a3a"/><rect x="280" y="12" width="16" height="27" fill="#E0D6C4"/><rect x="296" y="13" width="5" height="26" fill="#2a2420"/><rect x="301" y="14" width="10" height="25" fill="#A89880"/><rect x="311" y="12" width="9" height="27" fill="#6a5a48"/><circle cx="243" cy="15" r="2.5" fill="#D83050"/><rect x="176" y="38" width="144" height="17" fill="#120e0c"/><rect x="255" y="68" width="56" height="112" fill="#D9C3BE"/><rect x="255" y="55" width="65" height="13" fill="#15100e"/><rect x="309" y="55" width="11" height="125" fill="#2a221e"/><rect x="243" y="150" width="20" height="30" fill="#0c0c0e"/><rect x="192" y="53" width="63" height="97" fill="#DCCBB4"/><path d="M221 60 L224 60 L227 96 L236 140 L231 140 L225 118 L220 118 L214 140 L209 140 L218 96 Z" fill="#7a5c48" filter="url(#wb1)"/><rect x="196" y="118" width="56" height="28" fill="#b89880" opacity=".7" filter="url(#wb2)"/><rect x="197" y="78" width="14" height="13" fill="#8fb0b0"/><rect x="198" y="84" width="12" height="4" fill="#d8c060"/><path d="M236 56 L237 104" stroke="#2a2a30" stroke-width="1"/><ellipse cx="237" cy="110" rx="3" ry="4" fill="#1a2a5a"/><rect x="0" y="0" width="60" height="180" fill="url(#wcu)"/><rect x="30" y="0" width="6" height="180" fill="#dfe2e4" opacity=".6" filter="url(#wb2)"/><rect x="57" y="0" width="79" height="90" fill="url(#wcol)"/><rect x="57" y="0" width="79" height="90" fill="url(#wcolv)"/><rect x="55" y="88" width="90" height="92" fill="#121417"/><rect x="136" y="0" width="42" height="60" fill="#0e0e10"/><path d="M48 180 C52 150 62 128 82 121 C100 116 118 120 134 128 L190 124 C215 128 236 138 243 152 L245 180 Z" fill="#141a2a"/><g clip-path="url(#wshirt)" stroke="#B4C2CA" stroke-width="2" fill="none" opacity=".95"><path d="M40 142 C80 122 110 124 140 138"/><path d="M180 136 C205 126 228 130 250 142"/><path d="M40 153 C80 133 110 135 140 149"/><path d="M180 147 C205 137 228 141 250 153"/><path d="M40 164 C80 144 110 146 140 160"/><path d="M180 158 C205 148 228 152 250 164"/><path d="M40 175 C80 155 110 157 140 171"/><path d="M180 169 C205 159 228 163 250 175"/><path d="M40 186 C80 166 110 168 140 182"/><path d="M180 180 C205 170 228 174 250 186"/><path d="M40 197 C80 177 110 179 140 193"/><path d="M180 191 C205 181 228 185 250 197"/></g><path d="M132 126 C140 150 176 152 186 124 L184 108 L134 108 Z" fill="#C9957E"/><ellipse cx="152" cy="98" rx="39" ry="52" fill="url(#wface)" filter="url(#wb1)"/><ellipse cx="138" cy="112" rx="12" ry="10" fill="#D88A80" opacity=".55" filter="url(#wb2)"/><path d="M120 150 C135 160 168 160 184 146 C176 132 128 132 120 150Z" fill="#A87868" opacity=".5" filter="url(#wb2)"/><g filter="url(#wb1)"><ellipse cx="133" cy="92" rx="5.5" ry="2.4" fill="#4a4a4a" opacity=".85"/><ellipse cx="169" cy="93" rx="5.5" ry="2.4" fill="#4a4a4a" opacity=".85"/><path d="M124 85 C130 82 137 82 142 84 M160 85 C166 83 173 84 178 87" stroke="#8a5c44" stroke-width="2.2" fill="none" opacity=".8"/><path d="M142 131 C150 133 160 133 167 131" stroke="#C07070" stroke-width="3" fill="none" opacity=".8"/><path d="M148 112 C150 116 156 117 160 113" stroke="#B07A68" stroke-width="2" fill="none" opacity=".7"/></g><path d="M105 60 C100 36 118 18 145 16 C170 10 198 22 203 44 C208 60 200 76 194 86 C192 66 180 56 160 54 C140 52 122 58 116 78 C110 74 106 68 105 60Z" fill="url(#whair)" filter="url(#wb1)"/><g filter="url(#wb1)"><circle cx="104.6" cy="43.0" r="5.6" fill="#5E3B2C" opacity=".8"/><circle cx="108.2" cy="36.0" r="6.4" fill="#5E3B2C" opacity=".8"/><circle cx="113.7" cy="29.7" r="5.9" fill="#5E3B2C" opacity=".8"/><circle cx="120.9" cy="24.4" r="6.5" fill="#5E3B2C" opacity=".8"/><circle cx="129.6" cy="20.2" r="6.6" fill="#5E3B2C" opacity=".8"/><circle cx="139.2" cy="17.4" r="5.2" fill="#5E3B2C" opacity=".8"/><circle cx="149.4" cy="16.1" r="5.0" fill="#5E3B2C" opacity=".8"/><circle cx="159.7" cy="16.3" r="7.1" fill="#5E3B2C" opacity=".8"/><circle cx="169.8" cy="18.1" r="5.6" fill="#5E3B2C" opacity=".8"/><circle cx="179.2" cy="21.3" r="5.6" fill="#5E3B2C" opacity=".8"/><circle cx="187.4" cy="25.9" r="7.5" fill="#5E3B2C" opacity=".8"/><circle cx="194.1" cy="31.5" r="6.2" fill="#5E3B2C" opacity=".8"/><circle cx="199.1" cy="38.1" r="7.1" fill="#5E3B2C" opacity=".8"/><circle cx="202.1" cy="45.3" r="6.2" fill="#5E3B2C" opacity=".8"/><circle cx="165.7" cy="26.0" r="5.6" fill="#8C5E46" opacity=".8"/><circle cx="155.9" cy="49.7" r="3.5" fill="#A87A5E" opacity=".8"/><circle cx="192.4" cy="21.7" r="5.5" fill="#A87A5E" opacity=".8"/><circle cx="134.6" cy="43.8" r="5.1" fill="#B88866" opacity=".8"/><circle cx="189.4" cy="35.8" r="4.3" fill="#6E4636" opacity=".8"/><circle cx="190.6" cy="55.2" r="3.1" fill="#A87A5E" opacity=".8"/><circle cx="153.6" cy="30.3" r="5.3" fill="#B88866" opacity=".8"/><circle cx="183.8" cy="36.8" r="4.7" fill="#B88866" opacity=".8"/><circle cx="156.9" cy="36.3" r="5.7" fill="#8C5E46" opacity=".8"/><circle cx="169.3" cy="57.2" r="6.0" fill="#5A382A" opacity=".8"/><circle cx="168.4" cy="26.5" r="5.9" fill="#5A382A" opacity=".8"/><circle cx="188.0" cy="42.8" r="4.9" fill="#8C5E46" opacity=".8"/><circle cx="195.0" cy="30.7" r="3.2" fill="#A87A5E" opacity=".8"/><circle cx="183.7" cy="59.6" r="4.0" fill="#A87A5E" opacity=".8"/><circle cx="117.6" cy="55.9" r="3.9" fill="#A87A5E" opacity=".8"/><circle cx="176.6" cy="54.9" r="4.8" fill="#A87A5E" opacity=".8"/><circle cx="176.0" cy="35.1" r="4.0" fill="#6E4636" opacity=".8"/><circle cx="186.0" cy="59.2" r="3.7" fill="#6E4636" opacity=".8"/><circle cx="115.0" cy="20.3" r="4.8" fill="#A87A5E" opacity=".8"/><circle cx="114.6" cy="27.9" r="3.9" fill="#B88866" opacity=".8"/><circle cx="134.1" cy="47.6" r="3.9" fill="#5A382A" opacity=".8"/><circle cx="192.5" cy="55.9" r="4.1" fill="#B88866" opacity=".8"/></g><rect x="0" y="148" width="176" height="32" fill="#2a2a2a" opacity=".62"/></svg></div><span class="t" style="left:2245.4px;top:151.8px;font-size:16.5px;line-height:21px;color:#FFFFFF;letter-spacing:-0.219px;z-index:3;-webkit-text-stroke:0.3px #fff;">Avram Gheorghe Flo...</span>
</body></html>
